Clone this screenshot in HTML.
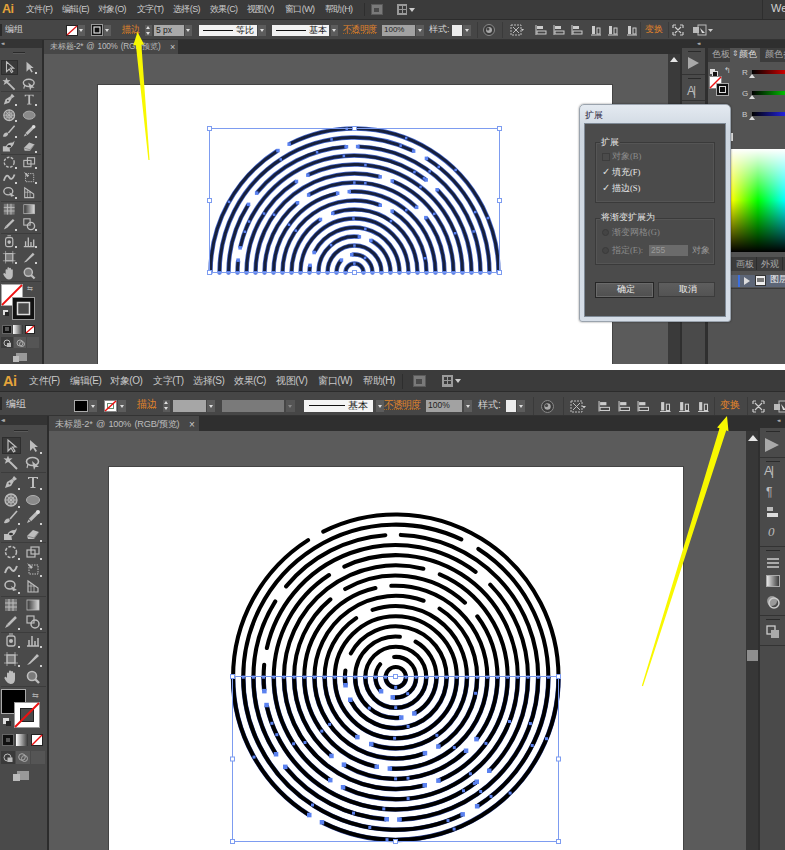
<!DOCTYPE html><html><head><meta charset="utf-8"><style>
*{box-sizing:border-box;margin:0;padding:0}
html,body{width:785px;height:850px;overflow:hidden;background:#fff}
body{position:relative;font-family:"Liberation Sans",sans-serif}
.a{position:absolute}
.t{position:absolute;white-space:nowrap;line-height:1}
.shot{position:absolute;left:0;width:785px;overflow:hidden;background:#535353}
.or{color:#e5852a;text-decoration:underline;text-underline-offset:1px}
</style></head><body>
<div class="shot" style="top:0;height:364px">
<div class="a" style="left:0px;top:0px;width:785px;height:19px;background:#3b3b3b;"></div>
<div class="a" style="left:0px;top:19px;width:785px;height:1px;background:#2c2c2c;"></div>
<div class="t" style="left:2px;top:3px;font-size:12.5px;color:#e4a33a;font-weight:bold;letter-spacing:-0.5px">Ai</div>
<div class="t" style="left:26px;top:5px;font-size:9px;color:#c9c9c9;letter-spacing:-0.6px">文件(F)</div>
<div class="t" style="left:62px;top:5px;font-size:9px;color:#c9c9c9;letter-spacing:-0.6px">编辑(E)</div>
<div class="t" style="left:98px;top:5px;font-size:9px;color:#c9c9c9;letter-spacing:-0.6px">对象(O)</div>
<div class="t" style="left:137px;top:5px;font-size:9px;color:#c9c9c9;letter-spacing:-0.6px">文字(T)</div>
<div class="t" style="left:173px;top:5px;font-size:9px;color:#c9c9c9;letter-spacing:-0.6px">选择(S)</div>
<div class="t" style="left:210px;top:5px;font-size:9px;color:#c9c9c9;letter-spacing:-0.6px">效果(C)</div>
<div class="t" style="left:247px;top:5px;font-size:9px;color:#c9c9c9;letter-spacing:-0.6px">视图(V)</div>
<div class="t" style="left:285px;top:5px;font-size:9px;color:#c9c9c9;letter-spacing:-0.6px">窗口(W)</div>
<div class="t" style="left:325px;top:5px;font-size:9px;color:#c9c9c9;letter-spacing:-0.6px">帮助(H)</div>
<div class="a" style="left:364px;top:3px;width:1px;height:13px;background:#2e2e2e;"></div>
<div class="a" style="left:371px;top:4px;width:12px;height:11px;background:#7a7a7a;border:1px solid #5a5a5a"></div>
<div class="a" style="left:374px;top:8px;width:5px;height:4px;background:#4a4a4a;"></div>
<div class="a" style="left:397px;top:4px;width:10px;height:11px;background:#9a9a9a;"></div>
<div class="a" style="left:399px;top:6px;width:3px;height:3px;background:#3b3b3b;"></div>
<div class="a" style="left:403px;top:6px;width:3px;height:3px;background:#3b3b3b;"></div>
<div class="a" style="left:399px;top:10px;width:3px;height:3px;background:#3b3b3b;"></div>
<div class="a" style="left:403px;top:10px;width:3px;height:3px;background:#3b3b3b;"></div>
<div class="a" style="left:409px;top:8px;width:0;height:0;border-left:3px solid transparent;border-right:3px solid transparent;border-top:4px solid #ccc"></div>
<div class="a" style="left:762px;top:0px;width:1px;height:19px;background:#2e2e2e;"></div>
<div class="t" style="left:771px;top:3px;font-size:11px;color:#d0d0d0;">Wel</div>
<div class="a" style="left:0px;top:20px;width:785px;height:20px;background:#464646;"></div>
<div class="a" style="left:0px;top:39px;width:785px;height:1px;background:#333;"></div>
<div class="a" style="left:0px;top:24px;width:2px;height:12px;background:#2a2a2a;"></div>
<div class="t" style="left:5px;top:25px;font-size:9px;color:#d4d4d4;">编组</div>
<svg class="a" style="left:66px;top:25px;" width="12" height="11" viewBox="0 0 12 11"><rect x=".5" y=".5" width="11" height="10" fill="#fff" stroke="#222"/><path d="M1 10 L11 1" stroke="#e01818" stroke-width="1.3"/></svg>
<div class="a" style="left:78px;top:25px;width:7px;height:11px;background:#5c5c5c"><div class="a" style="left:1.0px;top:4.0px;width:0;height:0;border-left:2.5px solid transparent;border-right:2.5px solid transparent;border-top:3px solid #dedede"></div></div>
<svg class="a" style="left:91px;top:24px;" width="12" height="12" viewBox="0 0 12 12"><rect x=".5" y=".5" width="11" height="11" fill="#111" stroke="#999"/><rect x="3" y="3" width="6" height="6" fill="#111" stroke="#ddd" stroke-width="1.2"/></svg>
<div class="a" style="left:104px;top:25px;width:7px;height:11px;background:#5c5c5c"><div class="a" style="left:1.0px;top:4.0px;width:0;height:0;border-left:2.5px solid transparent;border-right:2.5px solid transparent;border-top:3px solid #dedede"></div></div>
<div class="t" style="left:122px;top:25px;font-size:9px;color:#e0842c;text-decoration:underline dotted #a86420">描边</div>
<div class="a" style="left:145px;top:25px;width:7px;height:11px;background:#5a5a5a;"></div>
<div class="a" style="left:146px;top:26px;border-left:2.5px solid transparent;border-right:2.5px solid transparent;border-bottom:3px solid #ddd"></div>
<div class="a" style="left:146px;top:32px;border-left:2.5px solid transparent;border-right:2.5px solid transparent;border-top:3px solid #ddd"></div>
<div class="a" style="left:154px;top:25px;width:30px;height:11px;background:#a9a9a9;"></div>
<div class="t" style="left:156px;top:26px;font-size:8.5px;color:#222;">5 px</div>
<div class="a" style="left:185px;top:25px;width:7px;height:11px;background:#5c5c5c"><div class="a" style="left:1.0px;top:4.0px;width:0;height:0;border-left:2.5px solid transparent;border-right:2.5px solid transparent;border-top:3px solid #dedede"></div></div>
<div class="a" style="left:199px;top:25px;width:58px;height:11px;background:#f2f2f2;"></div>
<div class="a" style="left:203px;top:30px;width:30px;height:1.2px;background:#111;"></div>
<div class="t" style="left:236px;top:26px;font-size:9px;color:#111;">等比</div>
<div class="a" style="left:258px;top:25px;width:8px;height:11px;background:#5c5c5c"><div class="a" style="left:1.5px;top:4.0px;width:0;height:0;border-left:2.5px solid transparent;border-right:2.5px solid transparent;border-top:3px solid #dedede"></div></div>
<div class="a" style="left:272px;top:25px;width:57px;height:11px;background:#f2f2f2;"></div>
<div class="a" style="left:276px;top:30px;width:30px;height:1.2px;background:#111;"></div>
<div class="t" style="left:309px;top:26px;font-size:9px;color:#111;">基本</div>
<div class="a" style="left:331px;top:25px;width:7px;height:11px;background:#5c5c5c"><div class="a" style="left:1.0px;top:4.0px;width:0;height:0;border-left:2.5px solid transparent;border-right:2.5px solid transparent;border-top:3px solid #dedede"></div></div>
<div class="t" style="left:343px;top:25px;font-size:9px;color:#e0842c;text-decoration:underline dotted #a86420;letter-spacing:-0.7px">不透明度</div>
<div class="a" style="left:382px;top:25px;width:33px;height:11px;background:#a2a2a2;"></div>
<div class="t" style="left:384px;top:26px;font-size:8px;color:#222;">100%</div>
<div class="a" style="left:416px;top:25px;width:8px;height:11px;background:#5c5c5c"><div class="a" style="left:1.5px;top:4.0px;width:0;height:0;border-left:2.5px solid transparent;border-right:2.5px solid transparent;border-top:3px solid #dedede"></div></div>
<div class="t" style="left:429px;top:25px;font-size:9px;color:#d4d4d4;">样式:</div>
<div class="a" style="left:452px;top:25px;width:10px;height:11px;background:#ececec;"></div>
<div class="a" style="left:463px;top:25px;width:8px;height:11px;background:#5c5c5c"><div class="a" style="left:1.5px;top:4.0px;width:0;height:0;border-left:2.5px solid transparent;border-right:2.5px solid transparent;border-top:3px solid #dedede"></div></div>
<div class="a" style="left:477px;top:22px;width:1px;height:16px;background:#3a3a3a;"></div>
<svg class="a" style="left:483px;top:24px;" width="12" height="12" viewBox="0 0 12 12"><circle cx="6" cy="6" r="5.5" fill="#3a3a3a" stroke="#888"/><circle cx="6" cy="6" r="3" fill="#aaa"/><circle cx="5" cy="5" r="1.5" fill="#444"/></svg>
<div class="a" style="left:502px;top:22px;width:1px;height:16px;background:#3a3a3a;"></div>
<svg class="a" style="left:510px;top:24px;" width="14" height="12" viewBox="0 0 14 12"><rect x="1" y="1" width="10" height="10" fill="none" stroke="#bbb" stroke-dasharray="2 1"/><path d="M3 3L9 9M9 3L3 9" stroke="#bbb"/><path d="M11 5H14L12.5 7Z" fill="#ccc"/></svg>
<svg class="a" style="left:535px;top:24px;" width="12" height="12" viewBox="0 0 12 12"><g transform="scale(1)"><path d="M1 1V11" stroke="#ccc"/><rect x="2" y="2" width="6" height="3" fill="#ccc"/><rect x="2" y="7" width="9" height="3" fill="none" stroke="#ccc"/></g></svg>
<svg class="a" style="left:553px;top:24px;" width="12" height="12" viewBox="0 0 12 12"><g transform="scale(1)"><path d="M1 1V11" stroke="#ccc"/><rect x="2" y="2" width="6" height="3" fill="#ccc"/><rect x="2" y="7" width="9" height="3" fill="none" stroke="#ccc"/></g></svg>
<svg class="a" style="left:571px;top:24px;" width="12" height="12" viewBox="0 0 12 12"><g transform="scale(1)"><path d="M1 1V11" stroke="#ccc"/><rect x="2" y="2" width="6" height="3" fill="#ccc"/><rect x="2" y="7" width="9" height="3" fill="none" stroke="#ccc"/></g></svg>
<svg class="a" style="left:590px;top:24px;" width="12" height="12" viewBox="0 0 12 12"><g transform="scale(1)"><path d="M1 11H11" stroke="#ccc"/><rect x="2" y="2" width="3" height="8" fill="#ccc"/><rect x="7" y="4" width="3" height="6" fill="none" stroke="#ccc"/></g></svg>
<svg class="a" style="left:607px;top:24px;" width="12" height="12" viewBox="0 0 12 12"><g transform="scale(1)"><path d="M1 11H11" stroke="#ccc"/><rect x="2" y="2" width="3" height="8" fill="#ccc"/><rect x="7" y="4" width="3" height="6" fill="none" stroke="#ccc"/></g></svg>
<svg class="a" style="left:626px;top:24px;" width="12" height="12" viewBox="0 0 12 12"><g transform="scale(1)"><path d="M1 11H11" stroke="#ccc"/><rect x="2" y="2" width="3" height="8" fill="#ccc"/><rect x="7" y="4" width="3" height="6" fill="none" stroke="#ccc"/></g></svg>
<div class="a" style="left:640px;top:22px;width:1px;height:16px;background:#3a3a3a;"></div>
<div class="t" style="left:645px;top:25px;font-size:9px;color:#e5852a;">变换</div>
<div class="a" style="left:668px;top:22px;width:1px;height:16px;background:#3a3a3a;"></div>
<svg class="a" style="left:672px;top:24px;" width="12" height="12" viewBox="0 0 12 12"><path d="M1 1H4M1 1V4M11 1H8M11 1V4M1 11H4M1 11V8M11 11H8M11 11V8M3 3L9 9M9 3L3 9" stroke="#ccc" stroke-width="1.2"/></svg>
<svg class="a" style="left:692px;top:24px;" width="22" height="12" viewBox="0 0 22 12"><rect x="1" y="3" width="6" height="6" fill="#bbb"/><rect x="6" y="1" width="8" height="10" fill="none" stroke="#bbb"/><path d="M8 4L13 9L10 9Z" fill="#ddd"/><path d="M16 5H21L18.5 8Z" fill="#ccc"/></svg>
<div class="a" style="left:0px;top:40px;width:785px;height:14px;background:#2f2f2f;"></div>
<div class="a" style="left:44px;top:40px;width:134px;height:14px;background:#474747;"></div>
<div class="t" style="left:50px;top:43px;font-size:8.2px;color:#bdbdbd;letter-spacing:-0.2px;word-spacing:1px">未标题-2* @ 100% (RGB/预览)</div>
<div class="t" style="left:170px;top:43px;font-size:9px;color:#c9c9c9;">×</div>
<div class="a" style="left:0px;top:40px;width:43px;height:8px;background:#343434;"></div>
<div class="t" style="left:1px;top:41px;font-size:5px;color:#aaa;letter-spacing:-2px">◂◂</div>
<div class="a" style="left:0px;top:48px;width:42px;height:316px;background:#4a4a4a;"></div>
<div class="a" style="left:42px;top:40px;width:2px;height:324px;background:#2c2c2c;"></div>
<div class="a" style="left:13px;top:52px;width:12px;height:1px;background:#2a2a2a;"></div>
<div class="a" style="left:13px;top:53px;width:12px;height:1px;background:#5a5a5a;"></div>
<div class="a" style="left:1px;top:60px;width:17px;height:15px;background:#3a3a3a;border:1px solid #2e2e2e"></div>
<svg class="a" style="left:2.3px;top:59.8px;" width="14.4" height="14.4" viewBox="0 0 14.4 14.4"><g transform="scale(0.9)"><path d="M5 2 L5 13 L8 10 L10.5 14 L12 13 L9.5 9 L13 9 Z" fill="none" stroke="#bdbdbd" stroke-width="1.2"/></g></svg>
<svg class="a" style="left:22.3px;top:59.8px;" width="14.4" height="14.4" viewBox="0 0 14.4 14.4"><g transform="scale(0.9)"><path d="M5 2 L5 13 L8 10 L10.5 14 L12 13 L9.5 9 L13 9 Z" fill="#bdbdbd"/></g></svg>
<svg class="a" style="left:2.3px;top:76.8px;" width="14.4" height="14.4" viewBox="0 0 14.4 14.4"><g transform="scale(0.9)"><path d="M7 7 L14 14" stroke="#bdbdbd" stroke-width="2"/><path d="M5 0.5 L6.2 3.5 L9.5 3.3 L7 5.5 L8.3 8.8 L5 7 L1.8 8.8 L3 5.5 L0.5 3.3 L3.8 3.5Z" fill="#bdbdbd"/></g></svg>
<svg class="a" style="left:22.3px;top:76.8px;" width="14.4" height="14.4" viewBox="0 0 14.4 14.4"><g transform="scale(0.9)"><ellipse cx="7.5" cy="6.5" rx="6" ry="4" fill="none" stroke="#bdbdbd" stroke-width="1.6"/><path d="M7 6 L14 12 L10.5 12 L9 15 Z" fill="#bdbdbd"/><path d="M3 9 L2 13" stroke="#bdbdbd" stroke-width="1.2"/></g></svg>
<svg class="a" style="left:2.3px;top:91.8px;" width="14.4" height="14.4" viewBox="0 0 14.4 14.4"><g transform="scale(0.9)"><path d="M2 14 L4 8 L9 5 L11 7 L8 12 Z" fill="#bdbdbd"/><path d="M9 5 L11 2 L14 5 L11 7Z" fill="#bdbdbd"/><circle cx="6.5" cy="9.5" r="1" fill="#4a4a4a"/></g></svg>
<svg class="a" style="left:22.3px;top:91.8px;" width="14.4" height="14.4" viewBox="0 0 14.4 14.4"><g transform="scale(0.9)"><path d="M3 3 H13 V5 H12 L11.5 4 H9 V13 H10.5 V14 H5.5 V13 H7 V4 H4.5 L4 5 H3 Z" fill="#bdbdbd"/></g></svg>
<svg class="a" style="left:2.3px;top:107.8px;" width="14.4" height="14.4" viewBox="0 0 14.4 14.4"><g transform="scale(0.9)"><circle cx="8" cy="8" r="6" fill="#777" stroke="#bdbdbd" stroke-width="1.3"/><path d="M2 8H14M8 2V14M3.8 3.8L12.2 12.2M12.2 3.8L3.8 12.2" stroke="#bdbdbd" stroke-width=".8"/><circle cx="8" cy="8" r="3" fill="none" stroke="#bdbdbd" stroke-width=".8"/></g></svg>
<svg class="a" style="left:22.3px;top:107.8px;" width="14.4" height="14.4" viewBox="0 0 14.4 14.4"><g transform="scale(0.9)"><ellipse cx="8" cy="8" rx="6.5" ry="4.5" fill="#8a8a8a" stroke="#b0b0b0" stroke-width="1"/></g></svg>
<svg class="a" style="left:2.3px;top:123.8px;" width="14.4" height="14.4" viewBox="0 0 14.4 14.4"><g transform="scale(0.9)"><path d="M14 2 L7 10" stroke="#bdbdbd" stroke-width="1.6"/><path d="M1 14 Q2 9 6 9.5 Q8 12 5 13.5 Q3 14.5 1 14Z" fill="#bdbdbd"/></g></svg>
<svg class="a" style="left:22.3px;top:123.8px;" width="14.4" height="14.4" viewBox="0 0 14.4 14.4"><g transform="scale(0.9)"><path d="M13 3 L5 11" stroke="#bdbdbd" stroke-width="3.2"/><circle cx="13" cy="3" r="2" fill="#ddd"/><path d="M2 14 L3.5 10.5 L5.5 12.5 Z" fill="#bdbdbd"/></g></svg>
<svg class="a" style="left:2.3px;top:138.8px;" width="14.4" height="14.4" viewBox="0 0 14.4 14.4"><g transform="scale(0.9)"><path d="M1 8 H8 L9 14 H1 Z" fill="#bdbdbd"/><path d="M4 9 Q6 4 12 4 L14 2 Q13 9 7 11Z" fill="#bdbdbd"/><ellipse cx="8" cy="8" rx="2" ry="1.3" fill="#333"/></g></svg>
<svg class="a" style="left:22.3px;top:138.8px;" width="14.4" height="14.4" viewBox="0 0 14.4 14.4"><g transform="scale(0.9)"><path d="M2 10 L8 4 L14 6 L9 13 L3 13 Z" fill="#bdbdbd"/><path d="M2 10 L9 12 L14 6" stroke="#777" fill="none" stroke-width=".8"/></g></svg>
<svg class="a" style="left:2.3px;top:154.8px;" width="14.4" height="14.4" viewBox="0 0 14.4 14.4"><g transform="scale(0.9)"><circle cx="8" cy="8" r="5.5" fill="none" stroke="#bdbdbd" stroke-width="1.5" stroke-dasharray="3 1.5"/></g></svg>
<svg class="a" style="left:22.3px;top:154.8px;" width="14.4" height="14.4" viewBox="0 0 14.4 14.4"><g transform="scale(0.9)"><rect x="2" y="6" width="8" height="7" fill="none" stroke="#bdbdbd" stroke-width="1.2"/><rect x="6" y="3" width="8" height="7" fill="none" stroke="#bdbdbd" stroke-width="1.2"/></g></svg>
<svg class="a" style="left:2.3px;top:169.8px;" width="14.4" height="14.4" viewBox="0 0 14.4 14.4"><g transform="scale(0.9)"><path d="M2 12 Q5 3 8 8 T14 5" fill="none" stroke="#bdbdbd" stroke-width="2"/></g></svg>
<svg class="a" style="left:22.3px;top:169.8px;" width="14.4" height="14.4" viewBox="0 0 14.4 14.4"><g transform="scale(0.9)"><rect x="4" y="4" width="9" height="9" fill="none" stroke="#bdbdbd" stroke-width="1" stroke-dasharray="1.5 1"/><path d="M2 2 L8 6 L6 8Z" fill="#bdbdbd"/></g></svg>
<svg class="a" style="left:2.3px;top:184.8px;" width="14.4" height="14.4" viewBox="0 0 14.4 14.4"><g transform="scale(0.9)"><ellipse cx="7" cy="7" rx="5" ry="4" fill="none" stroke="#bdbdbd" stroke-width="1.5"/><path d="M8 8 L14 12 L10 13Z" fill="#bdbdbd"/></g></svg>
<svg class="a" style="left:22.3px;top:184.8px;" width="14.4" height="14.4" viewBox="0 0 14.4 14.4"><g transform="scale(0.9)"><path d="M3 14 V3 L13 10 V14 Z" fill="none" stroke="#bdbdbd" stroke-width="1.2"/><path d="M3 8H10M6 5V14M9 7V14" stroke="#bdbdbd" stroke-width=".8"/></g></svg>
<svg class="a" style="left:2.3px;top:201.8px;" width="14.4" height="14.4" viewBox="0 0 14.4 14.4"><g transform="scale(0.9)"><rect x="2" y="2" width="12" height="12" fill="#777"/><path d="M2 6H14M2 10H14M6 2V14M10 2V14" stroke="#bdbdbd" stroke-width="1"/></g></svg>
<svg class="a" style="left:22.3px;top:201.8px;" width="14.4" height="14.4" viewBox="0 0 14.4 14.4"><g transform="scale(0.9)"><defs><linearGradient id="gg29209"><stop offset="0" stop-color="#333"/><stop offset="1" stop-color="#ddd"/></linearGradient></defs><rect x="2" y="3" width="12" height="10" fill="url(#gg29209)" stroke="#bdbdbd" stroke-width=".8"/></g></svg>
<svg class="a" style="left:2.3px;top:216.8px;" width="14.4" height="14.4" viewBox="0 0 14.4 14.4"><g transform="scale(0.9)"><path d="M13 3 L5 11" stroke="#bdbdbd" stroke-width="2.5"/><path d="M2 14 L4 10 L6 12Z" fill="#bdbdbd"/></g></svg>
<svg class="a" style="left:22.3px;top:216.8px;" width="14.4" height="14.4" viewBox="0 0 14.4 14.4"><g transform="scale(0.9)"><rect x="2" y="2" width="7" height="7" fill="none" stroke="#bdbdbd" stroke-width="1.2"/><circle cx="10" cy="10" r="4" fill="none" stroke="#bdbdbd" stroke-width="1.5"/></g></svg>
<svg class="a" style="left:2.3px;top:233.8px;" width="14.4" height="14.4" viewBox="0 0 14.4 14.4"><g transform="scale(0.9)"><rect x="4" y="4" width="8" height="10" rx="2" fill="none" stroke="#bdbdbd" stroke-width="1.3"/><circle cx="8" cy="9" r="2" fill="#bdbdbd"/><path d="M6 2H10" stroke="#bdbdbd"/></g></svg>
<svg class="a" style="left:22.3px;top:233.8px;" width="14.4" height="14.4" viewBox="0 0 14.4 14.4"><g transform="scale(0.9)"><path d="M2 14H14M4 14V8M7 14V4M10 14V9M13 14V6" stroke="#bdbdbd" stroke-width="1.5"/></g></svg>
<svg class="a" style="left:2.3px;top:249.8px;" width="14.4" height="14.4" viewBox="0 0 14.4 14.4"><g transform="scale(0.9)"><rect x="4" y="4" width="8" height="8" fill="#777" stroke="#bdbdbd" stroke-width="1.2"/><path d="M1 4H15M1 12H15M4 1V15M12 1V15" stroke="#bdbdbd" stroke-width=".7"/></g></svg>
<svg class="a" style="left:22.3px;top:249.8px;" width="14.4" height="14.4" viewBox="0 0 14.4 14.4"><g transform="scale(0.9)"><path d="M2 14 L12 3 L14 5 L5 13 Z" fill="#bdbdbd"/></g></svg>
<svg class="a" style="left:2.3px;top:265.8px;" width="14.4" height="14.4" viewBox="0 0 14.4 14.4"><g transform="scale(0.9)"><path d="M4 9 V4.5 a1 1 0 0 1 2 0 V8 V2.5 a1 1 0 0 1 2 0 V8 V3 a1 1 0 0 1 2 0 V8 V4.5 a1 1 0 0 1 2 0 V10 Q12 15 7.5 15 Q5 15 3 12 L1.5 9.5 a1 1 0 0 1 2 -1 Z" fill="#bdbdbd"/></g></svg>
<svg class="a" style="left:22.3px;top:265.8px;" width="14.4" height="14.4" viewBox="0 0 14.4 14.4"><g transform="scale(0.9)"><circle cx="7" cy="7" r="4.5" fill="#7a7a7a" stroke="#bdbdbd" stroke-width="1.6"/><path d="M10 10 L14 14" stroke="#bdbdbd" stroke-width="2.4"/></g></svg>
<div class="a" style="left:1px;top:91px;width:40px;height:1px;background:#3c3c3c;"></div>
<div class="a" style="left:1px;top:154px;width:40px;height:1px;background:#3c3c3c;"></div>
<div class="a" style="left:1px;top:201px;width:40px;height:1px;background:#3c3c3c;"></div>
<div class="a" style="left:1px;top:233px;width:40px;height:1px;background:#3c3c3c;"></div>
<div class="a" style="left:1px;top:281px;width:40px;height:1px;background:#3c3c3c;"></div>
<div class="a" style="left:35px;top:72px;width:2px;height:2px;background:#cfcfcf;"></div>
<div class="a" style="left:15px;top:104px;width:2px;height:2px;background:#cfcfcf;"></div>
<div class="a" style="left:35px;top:104px;width:2px;height:2px;background:#cfcfcf;"></div>
<div class="a" style="left:15px;top:120px;width:2px;height:2px;background:#cfcfcf;"></div>
<div class="a" style="left:15px;top:136px;width:2px;height:2px;background:#cfcfcf;"></div>
<div class="a" style="left:35px;top:136px;width:2px;height:2px;background:#cfcfcf;"></div>
<div class="a" style="left:35px;top:151px;width:2px;height:2px;background:#cfcfcf;"></div>
<div class="a" style="left:15px;top:167px;width:2px;height:2px;background:#cfcfcf;"></div>
<div class="a" style="left:35px;top:167px;width:2px;height:2px;background:#cfcfcf;"></div>
<div class="a" style="left:15px;top:182px;width:2px;height:2px;background:#cfcfcf;"></div>
<div class="a" style="left:35px;top:182px;width:2px;height:2px;background:#cfcfcf;"></div>
<div class="a" style="left:15px;top:197px;width:2px;height:2px;background:#cfcfcf;"></div>
<div class="a" style="left:15px;top:229px;width:2px;height:2px;background:#cfcfcf;"></div>
<div class="a" style="left:35px;top:229px;width:2px;height:2px;background:#cfcfcf;"></div>
<div class="a" style="left:15px;top:246px;width:2px;height:2px;background:#cfcfcf;"></div>
<div class="a" style="left:35px;top:246px;width:2px;height:2px;background:#cfcfcf;"></div>
<div class="a" style="left:15px;top:262px;width:2px;height:2px;background:#cfcfcf;"></div>
<div class="a" style="left:35px;top:262px;width:2px;height:2px;background:#cfcfcf;"></div>
<svg class="a" style="left:1px;top:284px;" width="36" height="38" viewBox="0 0 36 38"><rect x=".5" y=".5" width="21" height="21" fill="#fff" stroke="#aaa"/><path d="M1 21L21 1" stroke="#e11" stroke-width="1.8"/><rect x="11.5" y="13.5" width="22" height="22" fill="#111" stroke="#999"/><rect x="16.5" y="18.5" width="12" height="12" fill="#4a4a4a" stroke="#ddd" stroke-width="1.5"/></svg>
<div class="t" style="left:27px;top:285px;font-size:7px;color:#aaa;">⇆</div>
<div class="a" style="left:3px;top:310px;width:5px;height:5px;background:#ddd;"></div>
<div class="a" style="left:5px;top:312px;width:4px;height:4px;background:#222;"></div>
<div class="a" style="left:2px;top:325px;width:10px;height:9px;background:#111;border:1px solid #666"></div>
<div class="a" style="left:5px;top:327px;width:4px;height:4px;background:#555;"></div>
<svg class="a" style="left:13px;top:325px;" width="10" height="9" viewBox="0 0 10 9"><defs><linearGradient id="mg1"><stop offset="0" stop-color="#fff"/><stop offset="1" stop-color="#333"/></linearGradient></defs><rect width="10" height="9" fill="url(#mg1)"/></svg>
<svg class="a" style="left:25px;top:325px;" width="10" height="9" viewBox="0 0 10 9"><rect x=".5" y=".5" width="9" height="8" fill="#fff" stroke="#222"/><path d="M1 8L9 1" stroke="#e11" stroke-width="1.3"/></svg>
<div class="a" style="left:1px;top:337px;width:12px;height:11px;background:#3a3a3a;"></div>
<div class="a" style="left:14px;top:337px;width:12px;height:11px;background:#5a5a5a;"></div>
<div class="a" style="left:27px;top:337px;width:12px;height:11px;background:#555;"></div>
<svg class="a" style="left:3px;top:339px;" width="9" height="8" viewBox="0 0 9 8"><circle cx="4" cy="4" r="3" fill="none" stroke="#bbb"/><rect x="4" y="4" width="4" height="4" fill="#bbb"/></svg>
<svg class="a" style="left:16px;top:339px;" width="9" height="8" viewBox="0 0 9 8"><circle cx="4" cy="4" r="3" fill="none" stroke="#aaa"/><circle cx="6" cy="5" r="2.5" fill="none" stroke="#aaa"/></svg>
<svg class="a" style="left:12px;top:352px;" width="16" height="11" viewBox="0 0 16 11"><rect x="4" y="1" width="11" height="8" fill="#999"/><rect x="1" y="4" width="6" height="6" fill="#bbb"/></svg>
<div class="a" style="left:44px;top:54px;width:624px;height:310px;background:#5b5b5b;"></div>
<div class="a" style="left:98px;top:85px;width:514px;height:279px;background:#ffffff;box-shadow:0 0 0 1px #444"></div>
<div class="a" style="left:668px;top:54px;width:12px;height:310px;background:#3a3a3a;"></div>
<div class="a" style="left:670px;top:57px;border-left:4px solid transparent;border-right:4px solid transparent;border-bottom:5px solid #e6e6e6"></div>
<div class="a" style="left:680px;top:40px;width:105px;height:8px;background:#2f2f2f;"></div>
<div class="t" style="left:697px;top:41px;font-size:5px;color:#aaa;letter-spacing:-2px">◂◂</div>
<div class="a" style="left:680px;top:48px;width:2px;height:316px;background:#2f2f2f;"></div>
<div class="a" style="left:682px;top:48px;width:23px;height:316px;background:#4a4a4a;"></div>
<div class="a" style="left:688px;top:51px;width:13px;height:1px;background:#2a2a2a;"></div>
<div class="a" style="left:682px;top:74px;width:23px;height:1px;background:#333;"></div>
<div class="a" style="left:682px;top:100px;width:23px;height:1px;background:#333;"></div>
<div class="a" style="left:688px;top:57px;border-top:6px solid transparent;border-bottom:6px solid transparent;border-left:11px solid #a9a9a9"></div>
<div class="a" style="left:688px;top:78px;width:13px;height:1px;background:#2a2a2a;"></div>
<div class="t" style="left:687px;top:85px;font-size:12px;color:#bbb;letter-spacing:-2px">A|</div>
<div class="a" style="left:705px;top:48px;width:3px;height:316px;background:#2f2f2f;"></div>
<div class="a" style="left:708px;top:48px;width:77px;height:316px;background:#535353;"></div>
<div class="a" style="left:708px;top:48px;width:77px;height:14px;background:#3c3c3c;"></div>
<div class="t" style="left:712px;top:50px;font-size:9px;color:#aaa;">色板</div>
<div class="a" style="left:730px;top:48px;width:30px;height:14px;background:#535353;"></div>
<div class="t" style="left:732px;top:50px;font-size:8px;color:#ccc;">⇕</div>
<div class="t" style="left:739px;top:50px;font-size:9px;color:#dedede;">颜色</div>
<div class="t" style="left:765px;top:50px;font-size:9px;color:#aaa;">颜色参考</div>
<svg class="a" style="left:709px;top:68px;" width="10" height="9" viewBox="0 0 10 9"><rect x="1" y="1" width="5" height="5" fill="#ddd"/><rect x="3.5" y="3.5" width="5" height="5" fill="#111" stroke="#ddd"/></svg>
<div class="t" style="left:724px;top:67px;font-size:8px;color:#ccc;">↰</div>
<svg class="a" style="left:709px;top:76px;" width="22" height="20" viewBox="0 0 22 20"><rect x=".5" y=".5" width="12" height="12" fill="#fff" stroke="#888"/><path d="M1 12L12 1" stroke="#e11" stroke-width="1.5"/><rect x="7.5" y="7.5" width="12" height="12" fill="#111" stroke="#aaa"/><rect x="10.5" y="10.5" width="6" height="6" fill="none" stroke="#ddd"/></svg>
<div class="t" style="left:742px;top:69px;font-size:8px;color:#ccc;">R</div>
<div class="a" style="left:752px;top:70px;width:33px;height:4px;background:linear-gradient(90deg,#000,#c00)"></div>
<div class="a" style="left:749px;top:74px;border-left:3px solid transparent;border-right:3px solid transparent;border-bottom:4px solid #ddd"></div>
<div class="t" style="left:742px;top:90px;font-size:8px;color:#ccc;">G</div>
<div class="a" style="left:752px;top:91px;width:33px;height:4px;background:linear-gradient(90deg,#000,#0b0)"></div>
<div class="a" style="left:749px;top:95px;border-left:3px solid transparent;border-right:3px solid transparent;border-bottom:4px solid #ddd"></div>
<div class="t" style="left:742px;top:111px;font-size:8px;color:#ccc;">B</div>
<div class="a" style="left:752px;top:112px;width:33px;height:4px;background:linear-gradient(90deg,#000,#22d)"></div>
<div class="a" style="left:749px;top:116px;border-left:3px solid transparent;border-right:3px solid transparent;border-bottom:4px solid #ddd"></div>
<div class="a" style="left:731px;top:133px;width:2px;height:8px;background:#ddd;"></div>
<div class="a" style="left:731px;top:149px;width:54px;height:103px;background:linear-gradient(180deg,rgba(255,255,255,1) 0%,rgba(255,255,255,0) 50%,rgba(0,0,0,0) 50%,rgba(0,0,0,1) 100%),linear-gradient(90deg,#ff0 0%,#0f0 50%,#0ff 100%)"></div>
<div class="a" style="left:731px;top:252px;width:54px;height:5px;background:#535353;"></div>
<div class="a" style="left:708px;top:257px;width:77px;height:14px;background:#3c3c3c;"></div>
<div class="t" style="left:736px;top:260px;font-size:9px;color:#aaa;">画板</div>
<div class="a" style="left:756px;top:257px;width:1px;height:13px;background:#2c2c2c;"></div>
<div class="t" style="left:761px;top:260px;font-size:9px;color:#aaa;">外观</div>
<div class="a" style="left:782px;top:257px;width:1px;height:13px;background:#2c2c2c;"></div>
<div class="a" style="left:731px;top:275px;width:54px;height:12px;background:#5d6677;"></div>
<div class="a" style="left:738px;top:275px;width:2px;height:12px;background:#3b6fe0;"></div>
<div class="a" style="left:744px;top:277px;border-top:4px solid transparent;border-bottom:4px solid transparent;border-left:6px solid #ddd"></div>
<div class="a" style="left:755px;top:275px;width:11px;height:11px;background:#eee;border:1px solid #333"></div>
<div class="a" style="left:757px;top:278px;width:7px;height:4px;background:#777;"></div>
<div class="t" style="left:770px;top:275px;font-size:9px;color:#eee;">图层</div>
<div class="a" style="left:708px;top:288px;width:77px;height:1px;background:#3a3a3a;"></div>
<svg class="a" style="left:0;top:0" width="785" height="364" viewBox="0 0 785 364"><path d="M498.50 272.50A144.00 144.00 0 0 0 290.28 143.61 M276.88 151.21A144.00 144.00 0 0 0 210.50 272.50 M489.50 272.50A135.00 135.00 0 0 0 427.56 158.98 M412.48 150.59A135.00 135.00 0 0 0 219.50 272.50 M480.50 272.50A126.00 126.00 0 0 0 358.94 146.58 M345.23 146.84A126.00 126.00 0 0 0 257.44 192.15 M247.86 205.39A126.00 126.00 0 0 0 228.50 272.50 M471.50 272.50A117.00 117.00 0 0 0 438.07 190.61 M425.11 179.21A117.00 117.00 0 0 0 240.40 246.62 M238.02 261.45A117.00 117.00 0 0 0 237.50 272.50 M462.50 272.50A108.00 108.00 0 0 0 308.95 174.58 M295.43 182.08A108.00 108.00 0 0 0 246.50 272.50 M453.50 272.50A99.00 99.00 0 0 0 393.41 181.47 M378.88 176.55A99.00 99.00 0 0 0 255.50 272.50 M444.50 272.50A90.00 90.00 0 0 0 426.61 218.65 M415.71 206.52A90.00 90.00 0 0 0 309.70 194.44 M296.59 203.60A90.00 90.00 0 0 0 264.50 272.50 M435.50 272.50A81.00 81.00 0 0 0 350.51 191.60 M336.45 193.54A81.00 81.00 0 0 0 273.50 272.50 M426.50 272.50A72.00 72.00 0 0 0 393.22 211.80 M379.09 204.83A72.00 72.00 0 0 0 282.50 272.50 M417.50 272.50A63.00 63.00 0 0 0 333.92 212.95 M319.42 220.17A63.00 63.00 0 0 0 291.50 272.50 M408.50 272.50A54.00 54.00 0 0 0 300.50 272.50 M399.50 272.50A45.00 45.00 0 0 0 314.73 251.45 M309.89 266.62A45.00 45.00 0 0 0 309.50 272.50 M390.50 272.50A36.00 36.00 0 0 0 371.99 241.03 M358.10 236.68A36.00 36.00 0 0 0 318.50 272.50 M381.50 272.50A27.00 27.00 0 0 0 327.50 272.50 M372.50 272.50A18.00 18.00 0 0 0 353.03 254.56 M340.64 261.01A18.00 18.00 0 0 0 336.50 272.50 M363.50 272.50A9.00 9.00 0 0 0 345.50 272.50" fill="none" stroke="#4466cc" stroke-width="4.40" stroke-linecap="round"/><path d="M498.50 272.50A144.00 144.00 0 0 0 290.28 143.61 M276.88 151.21A144.00 144.00 0 0 0 210.50 272.50 M489.50 272.50A135.00 135.00 0 0 0 427.56 158.98 M412.48 150.59A135.00 135.00 0 0 0 219.50 272.50 M480.50 272.50A126.00 126.00 0 0 0 358.94 146.58 M345.23 146.84A126.00 126.00 0 0 0 257.44 192.15 M247.86 205.39A126.00 126.00 0 0 0 228.50 272.50 M471.50 272.50A117.00 117.00 0 0 0 438.07 190.61 M425.11 179.21A117.00 117.00 0 0 0 240.40 246.62 M238.02 261.45A117.00 117.00 0 0 0 237.50 272.50 M462.50 272.50A108.00 108.00 0 0 0 308.95 174.58 M295.43 182.08A108.00 108.00 0 0 0 246.50 272.50 M453.50 272.50A99.00 99.00 0 0 0 393.41 181.47 M378.88 176.55A99.00 99.00 0 0 0 255.50 272.50 M444.50 272.50A90.00 90.00 0 0 0 426.61 218.65 M415.71 206.52A90.00 90.00 0 0 0 309.70 194.44 M296.59 203.60A90.00 90.00 0 0 0 264.50 272.50 M435.50 272.50A81.00 81.00 0 0 0 350.51 191.60 M336.45 193.54A81.00 81.00 0 0 0 273.50 272.50 M426.50 272.50A72.00 72.00 0 0 0 393.22 211.80 M379.09 204.83A72.00 72.00 0 0 0 282.50 272.50 M417.50 272.50A63.00 63.00 0 0 0 333.92 212.95 M319.42 220.17A63.00 63.00 0 0 0 291.50 272.50 M408.50 272.50A54.00 54.00 0 0 0 300.50 272.50 M399.50 272.50A45.00 45.00 0 0 0 314.73 251.45 M309.89 266.62A45.00 45.00 0 0 0 309.50 272.50 M390.50 272.50A36.00 36.00 0 0 0 371.99 241.03 M358.10 236.68A36.00 36.00 0 0 0 318.50 272.50 M381.50 272.50A27.00 27.00 0 0 0 327.50 272.50 M372.50 272.50A18.00 18.00 0 0 0 353.03 254.56 M340.64 261.01A18.00 18.00 0 0 0 336.50 272.50 M363.50 272.50A9.00 9.00 0 0 0 345.50 272.50" fill="none" stroke="#17203c" stroke-width="3.00" stroke-linecap="round"/><rect x="287.4" y="142.4" width="3.5" height="3.5" fill="#5b82f0"/><rect x="276.2" y="148.8" width="3.5" height="3.5" fill="#5b82f0"/><rect x="497.0" y="271.0" width="3" height="3" fill="#5b82f0"/><rect x="209.0" y="271.0" width="3" height="3" fill="#5b82f0"/><rect x="424.7" y="156.6" width="3.5" height="3.5" fill="#5b82f0"/><rect x="411.9" y="149.4" width="3.5" height="3.5" fill="#5b82f0"/><rect x="488.0" y="271.0" width="3" height="3" fill="#5b82f0"/><rect x="218.0" y="271.0" width="3" height="3" fill="#5b82f0"/><rect x="355.9" y="144.8" width="3.5" height="3.5" fill="#5b82f0"/><rect x="344.7" y="145.0" width="3.5" height="3.5" fill="#5b82f0"/><rect x="254.9" y="191.4" width="3.5" height="3.5" fill="#5b82f0"/><rect x="246.8" y="202.6" width="3.5" height="3.5" fill="#5b82f0"/><rect x="479.0" y="271.0" width="3" height="3" fill="#5b82f0"/><rect x="227.0" y="271.0" width="3" height="3" fill="#5b82f0"/><rect x="435.4" y="188.0" width="3.5" height="3.5" fill="#5b82f0"/><rect x="424.4" y="178.2" width="3.5" height="3.5" fill="#5b82f0"/><rect x="238.4" y="246.1" width="3.5" height="3.5" fill="#5b82f0"/><rect x="236.4" y="258.4" width="3.5" height="3.5" fill="#5b82f0"/><rect x="470.0" y="271.0" width="3" height="3" fill="#5b82f0"/><rect x="236.0" y="271.0" width="3" height="3" fill="#5b82f0"/><rect x="306.1" y="173.4" width="3.5" height="3.5" fill="#5b82f0"/><rect x="294.7" y="179.7" width="3.5" height="3.5" fill="#5b82f0"/><rect x="461.0" y="271.0" width="3" height="3" fill="#5b82f0"/><rect x="245.0" y="271.0" width="3" height="3" fill="#5b82f0"/><rect x="390.5" y="179.2" width="3.5" height="3.5" fill="#5b82f0"/><rect x="378.4" y="175.1" width="3.5" height="3.5" fill="#5b82f0"/><rect x="452.0" y="271.0" width="3" height="3" fill="#5b82f0"/><rect x="254.0" y="271.0" width="3" height="3" fill="#5b82f0"/><rect x="424.1" y="215.9" width="3.5" height="3.5" fill="#5b82f0"/><rect x="414.9" y="205.6" width="3.5" height="3.5" fill="#5b82f0"/><rect x="306.9" y="193.3" width="3.5" height="3.5" fill="#5b82f0"/><rect x="295.8" y="201.0" width="3.5" height="3.5" fill="#5b82f0"/><rect x="443.0" y="271.0" width="3" height="3" fill="#5b82f0"/><rect x="263.0" y="271.0" width="3" height="3" fill="#5b82f0"/><rect x="347.5" y="189.9" width="3.5" height="3.5" fill="#5b82f0"/><rect x="335.9" y="191.5" width="3.5" height="3.5" fill="#5b82f0"/><rect x="434.0" y="271.0" width="3" height="3" fill="#5b82f0"/><rect x="272.0" y="271.0" width="3" height="3" fill="#5b82f0"/><rect x="390.4" y="209.4" width="3.5" height="3.5" fill="#5b82f0"/><rect x="378.5" y="203.5" width="3.5" height="3.5" fill="#5b82f0"/><rect x="425.0" y="271.0" width="3" height="3" fill="#5b82f0"/><rect x="281.0" y="271.0" width="3" height="3" fill="#5b82f0"/><rect x="331.0" y="211.6" width="3.5" height="3.5" fill="#5b82f0"/><rect x="318.7" y="217.7" width="3.5" height="3.5" fill="#5b82f0"/><rect x="416.0" y="271.0" width="3" height="3" fill="#5b82f0"/><rect x="290.0" y="271.0" width="3" height="3" fill="#5b82f0"/><rect x="407.0" y="271.0" width="3" height="3" fill="#5b82f0"/><rect x="299.0" y="271.0" width="3" height="3" fill="#5b82f0"/><rect x="312.4" y="250.8" width="3.5" height="3.5" fill="#5b82f0"/><rect x="308.3" y="263.6" width="3.5" height="3.5" fill="#5b82f0"/><rect x="398.0" y="271.0" width="3" height="3" fill="#5b82f0"/><rect x="308.0" y="271.0" width="3" height="3" fill="#5b82f0"/><rect x="369.1" y="238.7" width="3.5" height="3.5" fill="#5b82f0"/><rect x="357.6" y="235.1" width="3.5" height="3.5" fill="#5b82f0"/><rect x="389.0" y="271.0" width="3" height="3" fill="#5b82f0"/><rect x="317.0" y="271.0" width="3" height="3" fill="#5b82f0"/><rect x="380.0" y="271.0" width="3" height="3" fill="#5b82f0"/><rect x="326.0" y="271.0" width="3" height="3" fill="#5b82f0"/><rect x="350.0" y="253.0" width="3.5" height="3.5" fill="#5b82f0"/><rect x="339.7" y="258.3" width="3.5" height="3.5" fill="#5b82f0"/><rect x="371.0" y="271.0" width="3" height="3" fill="#5b82f0"/><rect x="335.0" y="271.0" width="3" height="3" fill="#5b82f0"/><rect x="362.0" y="271.0" width="3" height="3" fill="#5b82f0"/><rect x="344.0" y="271.0" width="3" height="3" fill="#5b82f0"/><rect x="423.8" y="257.0" width="2.5" height="2.5" fill="#5b82f0"/><rect x="453.9" y="232.0" width="2.5" height="2.5" fill="#5b82f0"/><rect x="472.4" y="230.2" width="2.5" height="2.5" fill="#5b82f0"/><rect x="486.6" y="216.8" width="2.5" height="2.5" fill="#5b82f0"/><rect x="474.0" y="210.8" width="2.5" height="2.5" fill="#5b82f0"/><rect x="433.0" y="212.6" width="2.5" height="2.5" fill="#5b82f0"/><rect x="405.0" y="208.9" width="2.5" height="2.5" fill="#5b82f0"/><rect x="389.7" y="219.8" width="2.5" height="2.5" fill="#5b82f0"/><rect x="364.1" y="227.6" width="2.5" height="2.5" fill="#5b82f0"/><rect x="364.1" y="181.9" width="2.5" height="2.5" fill="#5b82f0"/><rect x="364.2" y="163.8" width="2.5" height="2.5" fill="#5b82f0"/><rect x="419.3" y="185.8" width="2.5" height="2.5" fill="#5b82f0"/><rect x="428.4" y="170.1" width="2.5" height="2.5" fill="#5b82f0"/><rect x="437.5" y="165.7" width="2.5" height="2.5" fill="#5b82f0"/><rect x="454.4" y="168.7" width="2.5" height="2.5" fill="#5b82f0"/><rect x="404.9" y="136.8" width="2.5" height="2.5" fill="#5b82f0"/><rect x="399.4" y="144.4" width="2.5" height="2.5" fill="#5b82f0"/><rect x="413.2" y="170.8" width="2.5" height="2.5" fill="#5b82f0"/><rect x="422.7" y="177.1" width="2.5" height="2.5" fill="#5b82f0"/><rect x="357.0" y="145.3" width="2.5" height="2.5" fill="#5b82f0"/><rect x="363.8" y="256.7" width="2.5" height="2.5" fill="#5b82f0"/><rect x="243.6" y="230.5" width="2.5" height="2.5" fill="#5b82f0"/><rect x="247.9" y="220.3" width="2.5" height="2.5" fill="#5b82f0"/><rect x="262.8" y="212.3" width="2.5" height="2.5" fill="#5b82f0"/><rect x="272.9" y="213.5" width="2.5" height="2.5" fill="#5b82f0"/><rect x="287.8" y="223.5" width="2.5" height="2.5" fill="#5b82f0"/><rect x="294.6" y="229.4" width="2.5" height="2.5" fill="#5b82f0"/><rect x="313.1" y="250.9" width="2.5" height="2.5" fill="#5b82f0"/><rect x="329.8" y="243.9" width="2.5" height="2.5" fill="#5b82f0"/><rect x="353.1" y="262.3" width="2.5" height="2.5" fill="#5b82f0"/><rect x="353.2" y="244.3" width="2.5" height="2.5" fill="#5b82f0"/><rect x="352.2" y="217.3" width="2.5" height="2.5" fill="#5b82f0"/><rect x="353.1" y="181.3" width="2.5" height="2.5" fill="#5b82f0"/><rect x="279.5" y="158.2" width="2.5" height="2.5" fill="#5b82f0"/><rect x="315.8" y="151.0" width="2.5" height="2.5" fill="#5b82f0"/><rect x="330.3" y="138.2" width="2.5" height="2.5" fill="#5b82f0"/><rect x="344.5" y="145.6" width="2.5" height="2.5" fill="#5b82f0"/><rect x="342.6" y="154.7" width="2.5" height="2.5" fill="#5b82f0"/><rect x="345.5" y="127.5" width="2.5" height="2.5" fill="#5b82f0"/><rect x="227.8" y="200.6" width="2.5" height="2.5" fill="#5b82f0"/><rect x="209.5" y="128.5" width="290.0" height="144.0" fill="none" stroke="#7d9cf0" stroke-width="1"/><rect x="207.5" y="126.5" width="4" height="4" fill="#fff" stroke="#7d9cf0" stroke-width="1"/><rect x="352.5" y="126.5" width="4" height="4" fill="#fff" stroke="#7d9cf0" stroke-width="1"/><rect x="497.5" y="126.5" width="4" height="4" fill="#fff" stroke="#7d9cf0" stroke-width="1"/><rect x="207.5" y="198.5" width="4" height="4" fill="#fff" stroke="#7d9cf0" stroke-width="1"/><rect x="497.5" y="198.5" width="4" height="4" fill="#fff" stroke="#7d9cf0" stroke-width="1"/><rect x="207.5" y="270.5" width="4" height="4" fill="#fff" stroke="#7d9cf0" stroke-width="1"/><rect x="352.5" y="270.5" width="4" height="4" fill="#fff" stroke="#7d9cf0" stroke-width="1"/><rect x="497.5" y="270.5" width="4" height="4" fill="#fff" stroke="#7d9cf0" stroke-width="1"/></svg>
<div class="a" style="left:579px;top:104px;width:152px;height:218px;border-radius:5px 5px 3px 3px;background:linear-gradient(180deg,#e4eaf1,#cdd6e0 12%,#d6dee8);border:1px solid #9aa3ad;box-shadow:0 0 2px rgba(0,0,0,.5)"></div>
<div class="t" style="left:585px;top:111px;font-size:9px;color:#2a1c3a;">扩展</div>
<div class="a" style="left:584px;top:123px;width:142px;height:194px;background:#4b4b4b;border:1px solid #7f8a96"></div>
<div class="a" style="left:595px;top:142px;width:120px;height:61px;background:transparent;border:1px solid #3a3a3a;box-shadow:inset 0 0 0 1px #555"></div>
<div class="a" style="left:600px;top:137px;width:20px;height:10px;background:#4b4b4b;"></div>
<div class="t" style="left:601px;top:138px;font-size:9px;color:#e6e6e6;">扩展</div>
<div class="a" style="left:602px;top:153px;width:8px;height:8px;background:transparent;border:1px solid #3d3d3d"></div>
<div class="t" style="left:612px;top:152px;font-size:8.5px;color:#8c8c8c;font-family:'Liberation Serif',serif">对象(B)</div>
<div class="t" style="left:602px;top:167px;font-size:10px;color:#ddd;">✓</div>
<div class="t" style="left:612px;top:168px;font-size:8.5px;color:#e8e8e8;font-family:'Liberation Serif',serif">填充(F)</div>
<div class="t" style="left:602px;top:183px;font-size:10px;color:#ddd;">✓</div>
<div class="t" style="left:612px;top:184px;font-size:8.5px;color:#e8e8e8;font-family:'Liberation Serif',serif">描边(S)</div>
<div class="a" style="left:595px;top:218px;width:120px;height:47px;background:transparent;border:1px solid #3a3a3a;box-shadow:inset 0 0 0 1px #555"></div>
<div class="a" style="left:600px;top:212px;width:54px;height:10px;background:#4b4b4b;"></div>
<div class="t" style="left:601px;top:213px;font-size:9px;color:#e6e6e6;">将渐变扩展为</div>
<div class="a" style="left:602px;top:229px;width:7px;height:7px;background:#444;border-radius:50%;border:1px solid #3a3a3a"></div>
<div class="t" style="left:612px;top:228px;font-size:8.5px;color:#8c8c8c;font-family:'Liberation Serif',serif">渐变网格(G)</div>
<div class="a" style="left:602px;top:247px;width:7px;height:7px;background:#444;border-radius:50%;border:1px solid #3a3a3a"></div>
<div class="t" style="left:612px;top:246px;font-size:8.5px;color:#8c8c8c;font-family:'Liberation Serif',serif">指定(E):</div>
<div class="a" style="left:649px;top:245px;width:39px;height:11px;background:#6b6b6b;"></div>
<div class="t" style="left:651px;top:246px;font-size:8.5px;color:#9a9a9a;">255</div>
<div class="t" style="left:692px;top:246px;font-size:9px;color:#9a9a9a;">对象</div>
<div class="a" style="left:595px;top:282px;width:59px;height:16px;background:linear-gradient(#5e5e5e,#4f4f4f);border:1px solid #262626;box-shadow:inset 0 0 0 1px #6a6a6a"></div>
<div class="t" style="left:617px;top:285px;font-size:9px;color:#eee;">确定</div>
<div class="a" style="left:658px;top:282px;width:57px;height:15px;background:linear-gradient(#5e5e5e,#535353);border:1px solid #3c3c3c"></div>
<div class="t" style="left:679px;top:285px;font-size:9px;color:#eee;">取消</div>
<svg class="a" style="left:0;top:0" width="785" height="363"><polygon points="137.5,32.0 144.1,44.5 141.4,44.7 149.6,159.9 148.4,160.1 135.9,45.2 133.2,45.4" fill="#f8f800"/></svg>
</div>
<div class="shot" style="top:370px;height:480px">
<div class="a" style="left:0px;top:0px;width:785px;height:22px;background:#3b3b3b;"></div>
<div class="a" style="left:0px;top:21px;width:785px;height:1px;background:#2c2c2c;"></div>
<div class="t" style="left:3px;top:4px;font-size:14.5px;color:#e4a33a;font-weight:bold;letter-spacing:-0.5px">Ai</div>
<div class="t" style="left:29px;top:6px;font-size:10px;color:#c9c9c9;letter-spacing:-0.4px">文件(F)</div>
<div class="t" style="left:70px;top:6px;font-size:10px;color:#c9c9c9;letter-spacing:-0.4px">编辑(E)</div>
<div class="t" style="left:110px;top:6px;font-size:10px;color:#c9c9c9;letter-spacing:-0.4px">对象(O)</div>
<div class="t" style="left:153px;top:6px;font-size:10px;color:#c9c9c9;letter-spacing:-0.4px">文字(T)</div>
<div class="t" style="left:193px;top:6px;font-size:10px;color:#c9c9c9;letter-spacing:-0.4px">选择(S)</div>
<div class="t" style="left:234px;top:6px;font-size:10px;color:#c9c9c9;letter-spacing:-0.4px">效果(C)</div>
<div class="t" style="left:276px;top:6px;font-size:10px;color:#c9c9c9;letter-spacing:-0.4px">视图(V)</div>
<div class="t" style="left:318px;top:6px;font-size:10px;color:#c9c9c9;letter-spacing:-0.4px">窗口(W)</div>
<div class="t" style="left:363px;top:6px;font-size:10px;color:#c9c9c9;letter-spacing:-0.4px">帮助(H)</div>
<div class="a" style="left:402px;top:4px;width:1px;height:15px;background:#2e2e2e;"></div>
<div class="a" style="left:413px;top:5px;width:13px;height:12px;background:#7a7a7a;border:1px solid #5a5a5a"></div>
<div class="a" style="left:416px;top:9px;width:6px;height:5px;background:#4a4a4a;"></div>
<div class="a" style="left:442px;top:5px;width:11px;height:12px;background:#9a9a9a;"></div>
<div class="a" style="left:444px;top:7px;width:3px;height:3px;background:#3b3b3b;"></div>
<div class="a" style="left:448px;top:7px;width:3px;height:3px;background:#3b3b3b;"></div>
<div class="a" style="left:444px;top:11px;width:3px;height:3px;background:#3b3b3b;"></div>
<div class="a" style="left:448px;top:11px;width:3px;height:3px;background:#3b3b3b;"></div>
<div class="a" style="left:455px;top:9px;width:0;height:0;border-left:3px solid transparent;border-right:3px solid transparent;border-top:4px solid #ccc"></div>
<div class="a" style="left:0px;top:22px;width:785px;height:24px;background:#464646;"></div>
<div class="a" style="left:0px;top:45px;width:785px;height:1px;background:#333;"></div>
<div class="a" style="left:0px;top:27px;width:2px;height:13px;background:#2a2a2a;"></div>
<div class="t" style="left:6px;top:29px;font-size:10px;color:#d4d4d4;">编组</div>
<svg class="a" style="left:74px;top:30px;" width="14" height="12" viewBox="0 0 14 12"><rect x=".5" y=".5" width="13" height="11" fill="#000" stroke="#aaa"/></svg>
<div class="a" style="left:89px;top:30px;width:8px;height:12px;background:#5c5c5c"><div class="a" style="left:1.5px;top:4.5px;width:0;height:0;border-left:2.5px solid transparent;border-right:2.5px solid transparent;border-top:3px solid #dedede"></div></div>
<svg class="a" style="left:104px;top:30px;" width="13" height="12" viewBox="0 0 13 12"><rect x=".5" y=".5" width="12" height="11" fill="#fff" stroke="#888"/><rect x="3.5" y="3.5" width="6" height="5" fill="none" stroke="#6a8a70" stroke-width="1"/><path d="M1 11L12 1" stroke="#e11" stroke-width="1.5"/></svg>
<div class="a" style="left:118px;top:30px;width:8px;height:12px;background:#5c5c5c"><div class="a" style="left:1.5px;top:4.5px;width:0;height:0;border-left:2.5px solid transparent;border-right:2.5px solid transparent;border-top:3px solid #dedede"></div></div>
<div class="t" style="left:137px;top:29px;font-size:10px;color:#e0842c;text-decoration:underline dotted #a86420">描边</div>
<div class="a" style="left:163px;top:30px;width:7px;height:12px;background:#5a5a5a;"></div>
<div class="a" style="left:164px;top:31px;border-left:2.5px solid transparent;border-right:2.5px solid transparent;border-bottom:3px solid #ddd"></div>
<div class="a" style="left:164px;top:37px;border-left:2.5px solid transparent;border-right:2.5px solid transparent;border-top:3px solid #ddd"></div>
<div class="a" style="left:173px;top:30px;width:33px;height:12px;background:#a6a6a6;"></div>
<div class="a" style="left:207px;top:30px;width:8px;height:12px;background:#5c5c5c"><div class="a" style="left:1.5px;top:4.5px;width:0;height:0;border-left:2.5px solid transparent;border-right:2.5px solid transparent;border-top:3px solid #dedede"></div></div>
<div class="a" style="left:222px;top:30px;width:62px;height:12px;background:#7a7a7a;"></div>
<div class="a" style="left:286px;top:30px;width:9px;height:12px;background:#555"><div class="a" style="left:2.0px;top:4.5px;width:0;height:0;border-left:2.5px solid transparent;border-right:2.5px solid transparent;border-top:3px solid #888"></div></div>
<div class="a" style="left:304px;top:30px;width:69px;height:12px;background:#f4f4f4;"></div>
<div class="a" style="left:309px;top:35px;width:36px;height:1.3px;background:#111;"></div>
<div class="t" style="left:348px;top:31px;font-size:10px;color:#111;">基本</div>
<div class="a" style="left:376px;top:30px;width:8px;height:12px;background:#5c5c5c"><div class="a" style="left:1.5px;top:4.5px;width:0;height:0;border-left:2.5px solid transparent;border-right:2.5px solid transparent;border-top:3px solid #dedede"></div></div>
<div class="t" style="left:384px;top:30px;font-size:10px;color:#e0842c;text-decoration:underline dotted #a86420;letter-spacing:-1px">不透明度</div>
<div class="a" style="left:426px;top:30px;width:36px;height:12px;background:#a2a2a2;"></div>
<div class="t" style="left:428px;top:31px;font-size:8.5px;color:#222;">100%</div>
<div class="a" style="left:464px;top:30px;width:8px;height:12px;background:#5c5c5c"><div class="a" style="left:1.5px;top:4.5px;width:0;height:0;border-left:2.5px solid transparent;border-right:2.5px solid transparent;border-top:3px solid #dedede"></div></div>
<div class="t" style="left:478px;top:30px;font-size:10px;color:#d4d4d4;">样式:</div>
<div class="a" style="left:506px;top:30px;width:10px;height:12px;background:#ececec;"></div>
<div class="a" style="left:517px;top:30px;width:8px;height:12px;background:#5c5c5c"><div class="a" style="left:1.5px;top:4.5px;width:0;height:0;border-left:2.5px solid transparent;border-right:2.5px solid transparent;border-top:3px solid #dedede"></div></div>
<div class="a" style="left:533px;top:27px;width:1px;height:18px;background:#3a3a3a;"></div>
<svg class="a" style="left:541px;top:30px;" width="13" height="13" viewBox="0 0 13 13"><circle cx="6.5" cy="6.5" r="6" fill="#3a3a3a" stroke="#888"/><circle cx="6.5" cy="6.5" r="3.2" fill="#aaa"/><circle cx="5.5" cy="5.5" r="1.6" fill="#444"/></svg>
<div class="a" style="left:563px;top:27px;width:1px;height:18px;background:#3a3a3a;"></div>
<svg class="a" style="left:570px;top:30px;" width="16" height="13" viewBox="0 0 16 13"><rect x="1" y="1" width="11" height="11" fill="none" stroke="#bbb" stroke-dasharray="2 1"/><path d="M3 3L10 10M10 3L3 10" stroke="#bbb"/><path d="M12 6H16L14 8.5Z" fill="#ccc"/></svg>
<svg class="a" style="left:598px;top:30px;" width="12" height="12" viewBox="0 0 12 12"><g transform="scale(1.05)"><path d="M1 1V11" stroke="#ccc"/><rect x="2" y="2" width="6" height="3" fill="#ccc"/><rect x="2" y="7" width="9" height="3" fill="none" stroke="#ccc"/></g></svg>
<svg class="a" style="left:618px;top:30px;" width="12" height="12" viewBox="0 0 12 12"><g transform="scale(1.05)"><path d="M1 1V11" stroke="#ccc"/><rect x="2" y="2" width="6" height="3" fill="#ccc"/><rect x="2" y="7" width="9" height="3" fill="none" stroke="#ccc"/></g></svg>
<svg class="a" style="left:637px;top:30px;" width="12" height="12" viewBox="0 0 12 12"><g transform="scale(1.05)"><path d="M1 1V11" stroke="#ccc"/><rect x="2" y="2" width="6" height="3" fill="#ccc"/><rect x="2" y="7" width="9" height="3" fill="none" stroke="#ccc"/></g></svg>
<svg class="a" style="left:659px;top:30px;" width="12" height="12" viewBox="0 0 12 12"><g transform="scale(1.05)"><path d="M1 11H11" stroke="#ccc"/><rect x="2" y="2" width="3" height="8" fill="#ccc"/><rect x="7" y="4" width="3" height="6" fill="none" stroke="#ccc"/></g></svg>
<svg class="a" style="left:678px;top:30px;" width="12" height="12" viewBox="0 0 12 12"><g transform="scale(1.05)"><path d="M1 11H11" stroke="#ccc"/><rect x="2" y="2" width="3" height="8" fill="#ccc"/><rect x="7" y="4" width="3" height="6" fill="none" stroke="#ccc"/></g></svg>
<svg class="a" style="left:697px;top:30px;" width="12" height="12" viewBox="0 0 12 12"><g transform="scale(1.05)"><path d="M1 11H11" stroke="#ccc"/><rect x="2" y="2" width="3" height="8" fill="#ccc"/><rect x="7" y="4" width="3" height="6" fill="none" stroke="#ccc"/></g></svg>
<div class="a" style="left:714px;top:27px;width:1px;height:18px;background:#3a3a3a;"></div>
<div class="t" style="left:720px;top:30px;font-size:10px;color:#e5852a;">变换</div>
<div class="a" style="left:747px;top:27px;width:1px;height:18px;background:#3a3a3a;"></div>
<svg class="a" style="left:752px;top:30px;" width="13" height="13" viewBox="0 0 13 13"><path d="M1 1H4M1 1V4M12 1H9M12 1V4M1 12H4M1 12V9M12 12H9M12 12V9M3 3L10 10M10 3L3 10" stroke="#ccc" stroke-width="1.2"/></svg>
<svg class="a" style="left:773px;top:30px;" width="12" height="13" viewBox="0 0 12 13"><rect x="1" y="4" width="6" height="6" fill="#bbb"/><rect x="6" y="1" width="8" height="11" fill="none" stroke="#bbb"/><path d="M8 4L13 10L10 10Z" fill="#ddd"/></svg>
<div class="a" style="left:0px;top:46px;width:785px;height:15px;background:#2f2f2f;"></div>
<div class="a" style="left:49px;top:46px;width:150px;height:15px;background:#474747;"></div>
<div class="t" style="left:55px;top:50px;font-size:9.2px;color:#bdbdbd;letter-spacing:-0.2px;word-spacing:1px">未标题-2* @ 100% (RGB/预览)</div>
<div class="t" style="left:189px;top:50px;font-size:10px;color:#c9c9c9;">×</div>
<div class="a" style="left:0px;top:46px;width:47px;height:9px;background:#343434;"></div>
<div class="t" style="left:1px;top:47px;font-size:6px;color:#aaa;letter-spacing:-2px">◂◂</div>
<div class="a" style="left:0px;top:55px;width:47px;height:425px;background:#4a4a4a;"></div>
<div class="a" style="left:47px;top:46px;width:2px;height:434px;background:#2c2c2c;"></div>
<div class="a" style="left:14px;top:60px;width:14px;height:1px;background:#2a2a2a;"></div>
<div class="a" style="left:14px;top:61px;width:14px;height:1px;background:#5a5a5a;"></div>
<div class="a" style="left:2px;top:67px;width:19px;height:17px;background:#3a3a3a;border:1px solid #2e2e2e"></div>
<svg class="a" style="left:2.5px;top:68.0px;" width="16.0" height="16.0" viewBox="0 0 16.0 16.0"><g transform="scale(1.0)"><path d="M5 2 L5 13 L8 10 L10.5 14 L12 13 L9.5 9 L13 9 Z" fill="none" stroke="#bdbdbd" stroke-width="1.2"/></g></svg>
<svg class="a" style="left:24.5px;top:68.0px;" width="16.0" height="16.0" viewBox="0 0 16.0 16.0"><g transform="scale(1.0)"><path d="M5 2 L5 13 L8 10 L10.5 14 L12 13 L9.5 9 L13 9 Z" fill="#bdbdbd"/></g></svg>
<svg class="a" style="left:2.5px;top:85.0px;" width="16.0" height="16.0" viewBox="0 0 16.0 16.0"><g transform="scale(1.0)"><path d="M7 7 L14 14" stroke="#bdbdbd" stroke-width="2"/><path d="M5 0.5 L6.2 3.5 L9.5 3.3 L7 5.5 L8.3 8.8 L5 7 L1.8 8.8 L3 5.5 L0.5 3.3 L3.8 3.5Z" fill="#bdbdbd"/></g></svg>
<svg class="a" style="left:24.5px;top:85.0px;" width="16.0" height="16.0" viewBox="0 0 16.0 16.0"><g transform="scale(1.0)"><ellipse cx="7.5" cy="6.5" rx="6" ry="4" fill="none" stroke="#bdbdbd" stroke-width="1.6"/><path d="M7 6 L14 12 L10.5 12 L9 15 Z" fill="#bdbdbd"/><path d="M3 9 L2 13" stroke="#bdbdbd" stroke-width="1.2"/></g></svg>
<svg class="a" style="left:2.5px;top:104.0px;" width="16.0" height="16.0" viewBox="0 0 16.0 16.0"><g transform="scale(1.0)"><path d="M2 14 L4 8 L9 5 L11 7 L8 12 Z" fill="#bdbdbd"/><path d="M9 5 L11 2 L14 5 L11 7Z" fill="#bdbdbd"/><circle cx="6.5" cy="9.5" r="1" fill="#4a4a4a"/></g></svg>
<svg class="a" style="left:24.5px;top:104.0px;" width="16.0" height="16.0" viewBox="0 0 16.0 16.0"><g transform="scale(1.0)"><path d="M3 3 H13 V5 H12 L11.5 4 H9 V13 H10.5 V14 H5.5 V13 H7 V4 H4.5 L4 5 H3 Z" fill="#bdbdbd"/></g></svg>
<svg class="a" style="left:2.5px;top:122.0px;" width="16.0" height="16.0" viewBox="0 0 16.0 16.0"><g transform="scale(1.0)"><circle cx="8" cy="8" r="6" fill="#777" stroke="#bdbdbd" stroke-width="1.3"/><path d="M2 8H14M8 2V14M3.8 3.8L12.2 12.2M12.2 3.8L3.8 12.2" stroke="#bdbdbd" stroke-width=".8"/><circle cx="8" cy="8" r="3" fill="none" stroke="#bdbdbd" stroke-width=".8"/></g></svg>
<svg class="a" style="left:24.5px;top:122.0px;" width="16.0" height="16.0" viewBox="0 0 16.0 16.0"><g transform="scale(1.0)"><ellipse cx="8" cy="8" rx="6.5" ry="4.5" fill="#8a8a8a" stroke="#b0b0b0" stroke-width="1"/></g></svg>
<svg class="a" style="left:2.5px;top:139.0px;" width="16.0" height="16.0" viewBox="0 0 16.0 16.0"><g transform="scale(1.0)"><path d="M14 2 L7 10" stroke="#bdbdbd" stroke-width="1.6"/><path d="M1 14 Q2 9 6 9.5 Q8 12 5 13.5 Q3 14.5 1 14Z" fill="#bdbdbd"/></g></svg>
<svg class="a" style="left:24.5px;top:139.0px;" width="16.0" height="16.0" viewBox="0 0 16.0 16.0"><g transform="scale(1.0)"><path d="M13 3 L5 11" stroke="#bdbdbd" stroke-width="3.2"/><circle cx="13" cy="3" r="2" fill="#ddd"/><path d="M2 14 L3.5 10.5 L5.5 12.5 Z" fill="#bdbdbd"/></g></svg>
<svg class="a" style="left:2.5px;top:156.0px;" width="16.0" height="16.0" viewBox="0 0 16.0 16.0"><g transform="scale(1.0)"><path d="M1 8 H8 L9 14 H1 Z" fill="#bdbdbd"/><path d="M4 9 Q6 4 12 4 L14 2 Q13 9 7 11Z" fill="#bdbdbd"/><ellipse cx="8" cy="8" rx="2" ry="1.3" fill="#333"/></g></svg>
<svg class="a" style="left:24.5px;top:156.0px;" width="16.0" height="16.0" viewBox="0 0 16.0 16.0"><g transform="scale(1.0)"><path d="M2 10 L8 4 L14 6 L9 13 L3 13 Z" fill="#bdbdbd"/><path d="M2 10 L9 12 L14 6" stroke="#777" fill="none" stroke-width=".8"/></g></svg>
<svg class="a" style="left:2.5px;top:174.0px;" width="16.0" height="16.0" viewBox="0 0 16.0 16.0"><g transform="scale(1.0)"><circle cx="8" cy="8" r="5.5" fill="none" stroke="#bdbdbd" stroke-width="1.5" stroke-dasharray="3 1.5"/></g></svg>
<svg class="a" style="left:24.5px;top:174.0px;" width="16.0" height="16.0" viewBox="0 0 16.0 16.0"><g transform="scale(1.0)"><rect x="2" y="6" width="8" height="7" fill="none" stroke="#bdbdbd" stroke-width="1.2"/><rect x="6" y="3" width="8" height="7" fill="none" stroke="#bdbdbd" stroke-width="1.2"/></g></svg>
<svg class="a" style="left:2.5px;top:191.0px;" width="16.0" height="16.0" viewBox="0 0 16.0 16.0"><g transform="scale(1.0)"><path d="M2 12 Q5 3 8 8 T14 5" fill="none" stroke="#bdbdbd" stroke-width="2"/></g></svg>
<svg class="a" style="left:24.5px;top:191.0px;" width="16.0" height="16.0" viewBox="0 0 16.0 16.0"><g transform="scale(1.0)"><rect x="4" y="4" width="9" height="9" fill="none" stroke="#bdbdbd" stroke-width="1" stroke-dasharray="1.5 1"/><path d="M2 2 L8 6 L6 8Z" fill="#bdbdbd"/></g></svg>
<svg class="a" style="left:2.5px;top:208.0px;" width="16.0" height="16.0" viewBox="0 0 16.0 16.0"><g transform="scale(1.0)"><ellipse cx="7" cy="7" rx="5" ry="4" fill="none" stroke="#bdbdbd" stroke-width="1.5"/><path d="M8 8 L14 12 L10 13Z" fill="#bdbdbd"/></g></svg>
<svg class="a" style="left:24.5px;top:208.0px;" width="16.0" height="16.0" viewBox="0 0 16.0 16.0"><g transform="scale(1.0)"><path d="M3 14 V3 L13 10 V14 Z" fill="none" stroke="#bdbdbd" stroke-width="1.2"/><path d="M3 8H10M6 5V14M9 7V14" stroke="#bdbdbd" stroke-width=".8"/></g></svg>
<svg class="a" style="left:2.5px;top:227.0px;" width="16.0" height="16.0" viewBox="0 0 16.0 16.0"><g transform="scale(1.0)"><rect x="2" y="2" width="12" height="12" fill="#777"/><path d="M2 6H14M2 10H14M6 2V14M10 2V14" stroke="#bdbdbd" stroke-width="1"/></g></svg>
<svg class="a" style="left:24.5px;top:227.0px;" width="16.0" height="16.0" viewBox="0 0 16.0 16.0"><g transform="scale(1.0)"><defs><linearGradient id="gg32235"><stop offset="0" stop-color="#333"/><stop offset="1" stop-color="#ddd"/></linearGradient></defs><rect x="2" y="3" width="12" height="10" fill="url(#gg32235)" stroke="#bdbdbd" stroke-width=".8"/></g></svg>
<svg class="a" style="left:2.5px;top:244.0px;" width="16.0" height="16.0" viewBox="0 0 16.0 16.0"><g transform="scale(1.0)"><path d="M13 3 L5 11" stroke="#bdbdbd" stroke-width="2.5"/><path d="M2 14 L4 10 L6 12Z" fill="#bdbdbd"/></g></svg>
<svg class="a" style="left:24.5px;top:244.0px;" width="16.0" height="16.0" viewBox="0 0 16.0 16.0"><g transform="scale(1.0)"><rect x="2" y="2" width="7" height="7" fill="none" stroke="#bdbdbd" stroke-width="1.2"/><circle cx="10" cy="10" r="4" fill="none" stroke="#bdbdbd" stroke-width="1.5"/></g></svg>
<svg class="a" style="left:2.5px;top:262.0px;" width="16.0" height="16.0" viewBox="0 0 16.0 16.0"><g transform="scale(1.0)"><rect x="4" y="4" width="8" height="10" rx="2" fill="none" stroke="#bdbdbd" stroke-width="1.3"/><circle cx="8" cy="9" r="2" fill="#bdbdbd"/><path d="M6 2H10" stroke="#bdbdbd"/></g></svg>
<svg class="a" style="left:24.5px;top:262.0px;" width="16.0" height="16.0" viewBox="0 0 16.0 16.0"><g transform="scale(1.0)"><path d="M2 14H14M4 14V8M7 14V4M10 14V9M13 14V6" stroke="#bdbdbd" stroke-width="1.5"/></g></svg>
<svg class="a" style="left:2.5px;top:281.0px;" width="16.0" height="16.0" viewBox="0 0 16.0 16.0"><g transform="scale(1.0)"><rect x="4" y="4" width="8" height="8" fill="#777" stroke="#bdbdbd" stroke-width="1.2"/><path d="M1 4H15M1 12H15M4 1V15M12 1V15" stroke="#bdbdbd" stroke-width=".7"/></g></svg>
<svg class="a" style="left:24.5px;top:281.0px;" width="16.0" height="16.0" viewBox="0 0 16.0 16.0"><g transform="scale(1.0)"><path d="M2 14 L12 3 L14 5 L5 13 Z" fill="#bdbdbd"/></g></svg>
<svg class="a" style="left:2.5px;top:299.0px;" width="16.0" height="16.0" viewBox="0 0 16.0 16.0"><g transform="scale(1.0)"><path d="M4 9 V4.5 a1 1 0 0 1 2 0 V8 V2.5 a1 1 0 0 1 2 0 V8 V3 a1 1 0 0 1 2 0 V8 V4.5 a1 1 0 0 1 2 0 V10 Q12 15 7.5 15 Q5 15 3 12 L1.5 9.5 a1 1 0 0 1 2 -1 Z" fill="#bdbdbd"/></g></svg>
<svg class="a" style="left:24.5px;top:299.0px;" width="16.0" height="16.0" viewBox="0 0 16.0 16.0"><g transform="scale(1.0)"><circle cx="7" cy="7" r="4.5" fill="#7a7a7a" stroke="#bdbdbd" stroke-width="1.6"/><path d="M10 10 L14 14" stroke="#bdbdbd" stroke-width="2.4"/></g></svg>
<div class="a" style="left:1px;top:102px;width:45px;height:1px;background:#3c3c3c;"></div>
<div class="a" style="left:1px;top:172px;width:45px;height:1px;background:#3c3c3c;"></div>
<div class="a" style="left:1px;top:226px;width:45px;height:1px;background:#3c3c3c;"></div>
<div class="a" style="left:1px;top:262px;width:45px;height:1px;background:#3c3c3c;"></div>
<div class="a" style="left:1px;top:316px;width:45px;height:1px;background:#3c3c3c;"></div>
<div class="a" style="left:40px;top:82px;width:2px;height:2px;background:#cfcfcf;"></div>
<div class="a" style="left:18px;top:118px;width:2px;height:2px;background:#cfcfcf;"></div>
<div class="a" style="left:40px;top:118px;width:2px;height:2px;background:#cfcfcf;"></div>
<div class="a" style="left:18px;top:136px;width:2px;height:2px;background:#cfcfcf;"></div>
<div class="a" style="left:18px;top:153px;width:2px;height:2px;background:#cfcfcf;"></div>
<div class="a" style="left:40px;top:153px;width:2px;height:2px;background:#cfcfcf;"></div>
<div class="a" style="left:40px;top:170px;width:2px;height:2px;background:#cfcfcf;"></div>
<div class="a" style="left:18px;top:188px;width:2px;height:2px;background:#cfcfcf;"></div>
<div class="a" style="left:40px;top:188px;width:2px;height:2px;background:#cfcfcf;"></div>
<div class="a" style="left:18px;top:205px;width:2px;height:2px;background:#cfcfcf;"></div>
<div class="a" style="left:40px;top:205px;width:2px;height:2px;background:#cfcfcf;"></div>
<div class="a" style="left:18px;top:222px;width:2px;height:2px;background:#cfcfcf;"></div>
<div class="a" style="left:18px;top:258px;width:2px;height:2px;background:#cfcfcf;"></div>
<div class="a" style="left:40px;top:258px;width:2px;height:2px;background:#cfcfcf;"></div>
<div class="a" style="left:18px;top:276px;width:2px;height:2px;background:#cfcfcf;"></div>
<div class="a" style="left:40px;top:276px;width:2px;height:2px;background:#cfcfcf;"></div>
<div class="a" style="left:18px;top:295px;width:2px;height:2px;background:#cfcfcf;"></div>
<div class="a" style="left:40px;top:295px;width:2px;height:2px;background:#cfcfcf;"></div>
<svg class="a" style="left:1px;top:319px;" width="40" height="40" viewBox="0 0 40 40"><rect x=".5" y=".5" width="24" height="24" fill="#000" stroke="#aaa"/><rect x="13.5" y="13.5" width="25" height="25" fill="#fff" stroke="#999"/><rect x="19.5" y="19.5" width="13" height="13" fill="#4a4a4a" stroke="#222" stroke-width="1"/><path d="M14 38L38 14" stroke="#e11" stroke-width="2"/></svg>
<div class="t" style="left:32px;top:322px;font-size:8px;color:#aaa;">⇆</div>
<div class="a" style="left:3px;top:348px;width:6px;height:6px;background:#ddd;"></div>
<div class="a" style="left:6px;top:351px;width:5px;height:5px;background:#222;"></div>
<div class="a" style="left:2px;top:364px;width:12px;height:12px;background:#111;border:1px solid #666"></div>
<div class="a" style="left:6px;top:368px;width:4px;height:4px;background:#555;"></div>
<svg class="a" style="left:16px;top:364px;" width="12" height="12" viewBox="0 0 12 12"><defs><linearGradient id="mg2"><stop offset="0" stop-color="#fff"/><stop offset="1" stop-color="#333"/></linearGradient></defs><rect width="12" height="12" fill="url(#mg2)"/></svg>
<svg class="a" style="left:31px;top:364px;" width="12" height="12" viewBox="0 0 12 12"><rect x=".5" y=".5" width="11" height="11" fill="#fff" stroke="#222"/><path d="M1 11L11 1" stroke="#e11" stroke-width="1.5"/></svg>
<div class="a" style="left:1px;top:381px;width:14px;height:13px;background:#3a3a3a;"></div>
<div class="a" style="left:16px;top:381px;width:14px;height:13px;background:#5a5a5a;"></div>
<div class="a" style="left:31px;top:381px;width:14px;height:13px;background:#555;"></div>
<svg class="a" style="left:3px;top:383px;" width="10" height="9" viewBox="0 0 10 9"><circle cx="4.5" cy="4.5" r="3.5" fill="none" stroke="#bbb"/><rect x="4.5" y="4.5" width="5" height="4.5" fill="#bbb"/></svg>
<svg class="a" style="left:18px;top:383px;" width="10" height="9" viewBox="0 0 10 9"><circle cx="4" cy="4" r="3.3" fill="none" stroke="#aaa"/><circle cx="6.5" cy="5.5" r="3" fill="none" stroke="#aaa"/></svg>
<svg class="a" style="left:12px;top:400px;" width="18" height="12" viewBox="0 0 18 12"><rect x="5" y="1" width="12" height="9" fill="#999"/><rect x="1" y="4" width="7" height="7" fill="#bbb"/></svg>
<div class="a" style="left:49px;top:61px;width:697px;height:419px;background:#5b5b5b;"></div>
<div class="a" style="left:109px;top:97px;width:574px;height:383px;background:#ffffff;box-shadow:0 0 0 1px #444"></div>
<div class="a" style="left:746px;top:61px;width:14px;height:419px;background:#373737;"></div>
<div class="a" style="left:748px;top:65px;border-left:5px solid transparent;border-right:5px solid transparent;border-bottom:6px solid #e6e6e6"></div>
<div class="a" style="left:747px;top:280px;width:12px;height:11px;background:#8e8e8e;"></div>
<div class="a" style="left:758px;top:46px;width:27px;height:12px;background:#2f2f2f;"></div>
<div class="t" style="left:777px;top:48px;font-size:5px;color:#aaa;letter-spacing:-2px">◂◂</div>
<div class="a" style="left:758px;top:58px;width:2px;height:422px;background:#2f2f2f;"></div>
<div class="a" style="left:760px;top:58px;width:25px;height:422px;background:#4a4a4a;"></div>
<div class="a" style="left:766px;top:61px;width:14px;height:1px;background:#2a2a2a;"></div>
<div class="a" style="left:765px;top:68px;border-top:7px solid transparent;border-bottom:7px solid transparent;border-left:14px solid #a9a9a9"></div>
<div class="a" style="left:760px;top:87px;width:25px;height:1px;background:#333;"></div>
<div class="a" style="left:766px;top:91px;width:14px;height:1px;background:#2a2a2a;"></div>
<div class="t" style="left:764px;top:94px;font-size:13px;color:#bbb;letter-spacing:-2px">A|</div>
<div class="t" style="left:766px;top:116px;font-size:12px;color:#bbb;">¶</div>
<svg class="a" style="left:766px;top:136px;" width="14" height="12" viewBox="0 0 14 12"><rect x="1" y="1" width="6" height="4" fill="#bbb"/><rect x="1" y="7" width="11" height="4" fill="#ddd"/></svg>
<div class="t" style="left:768px;top:155px;font-size:13px;color:#bbb;font-style:italic;font-family:'Liberation Serif',serif">0</div>
<div class="a" style="left:760px;top:176px;width:25px;height:1px;background:#333;"></div>
<div class="a" style="left:766px;top:180px;width:14px;height:1px;background:#2a2a2a;"></div>
<svg class="a" style="left:766px;top:187px;" width="14" height="12" viewBox="0 0 14 12"><path d="M1 2H13M1 6H13M1 10H13" stroke="#ccc" stroke-width="1.5"/></svg>
<svg class="a" style="left:766px;top:205px;" width="14" height="12" viewBox="0 0 14 12"><defs><linearGradient id="dg"><stop offset="0" stop-color="#eee"/><stop offset="1" stop-color="#333"/></linearGradient></defs><rect x=".5" y=".5" width="13" height="11" fill="url(#dg)" stroke="#aaa"/></svg>
<svg class="a" style="left:766px;top:225px;" width="14" height="14" viewBox="0 0 14 14"><circle cx="6" cy="6" r="5" fill="#999"/><circle cx="8" cy="8" r="5" fill="none" stroke="#ccc" stroke-width="1.5"/></svg>
<div class="a" style="left:760px;top:245px;width:25px;height:1px;background:#333;"></div>
<div class="a" style="left:766px;top:249px;width:14px;height:1px;background:#2a2a2a;"></div>
<svg class="a" style="left:766px;top:255px;" width="14" height="14" viewBox="0 0 14 14"><rect x="1" y="1" width="8" height="8" fill="none" stroke="#ccc" stroke-width="1.3"/><rect x="5" y="5" width="8" height="8" fill="#aaa"/></svg>
<div class="a" style="left:760px;top:275px;width:25px;height:1px;background:#333;"></div>
<svg class="a" style="left:0;top:0" width="785" height="480" viewBox="0 0 785 480"><path d="M558.52 307.20A162.72 162.72 0 0 0 323.24 161.56 M308.09 170.14A162.72 162.72 0 0 0 233.08 307.20 M548.35 307.20A152.55 152.55 0 0 0 478.36 178.92 M461.32 169.44A152.55 152.55 0 0 0 243.25 307.20 M538.18 307.20A142.38 142.38 0 0 0 400.81 164.91 M385.33 165.21A142.38 142.38 0 0 0 286.12 216.41 M275.29 231.37A142.38 142.38 0 0 0 253.42 307.20 M528.01 307.20A132.21 132.21 0 0 0 490.23 214.67 M475.58 201.78A132.21 132.21 0 0 0 266.87 277.95 M264.18 294.72A132.21 132.21 0 0 0 263.59 307.20 M517.84 307.20A122.04 122.04 0 0 0 344.33 196.54 M329.06 205.03A122.04 122.04 0 0 0 273.76 307.20 M507.67 307.20A111.87 111.87 0 0 0 439.77 204.33 M423.35 198.78A111.87 111.87 0 0 0 283.93 307.20 M497.50 307.20A101.70 101.70 0 0 0 477.28 246.34 M464.97 232.64A101.70 101.70 0 0 0 345.17 219.00 M330.37 229.35A101.70 101.70 0 0 0 294.10 307.20 M487.33 307.20A91.53 91.53 0 0 0 391.29 215.78 M375.41 217.97A91.53 91.53 0 0 0 304.27 307.20 M477.16 307.20A81.36 81.36 0 0 0 439.55 238.61 M423.58 230.73A81.36 81.36 0 0 0 314.44 307.20 M466.99 307.20A71.19 71.19 0 0 0 372.55 239.91 M356.16 248.07A71.19 71.19 0 0 0 324.61 307.20 M456.82 307.20A61.02 61.02 0 0 0 334.78 307.20 M446.65 307.20A50.85 50.85 0 0 0 350.86 283.41 M345.39 300.56A50.85 50.85 0 0 0 344.95 307.20 M436.48 307.20A40.68 40.68 0 0 0 415.56 271.64 M399.87 266.72A40.68 40.68 0 0 0 355.12 307.20 M426.31 307.20A30.51 30.51 0 0 0 365.29 307.20 M416.14 307.20A20.34 20.34 0 0 0 394.14 286.93 M380.14 294.22A20.34 20.34 0 0 0 375.46 307.20 M405.97 307.20A10.17 10.17 0 0 0 385.63 307.20" fill="none" stroke="#000" stroke-width="4.07" stroke-linecap="round"/><path d="M558.52 307.20A162.72 162.72 0 0 1 323.24 452.84 M308.09 444.26A162.72 162.72 0 0 1 233.08 307.20 M548.35 307.20A152.55 152.55 0 0 1 478.36 435.48 M461.32 444.96A152.55 152.55 0 0 1 243.25 307.20 M538.18 307.20A142.38 142.38 0 0 1 400.81 449.49 M385.33 449.19A142.38 142.38 0 0 1 286.12 397.99 M275.29 383.03A142.38 142.38 0 0 1 253.42 307.20 M528.01 307.20A132.21 132.21 0 0 1 490.23 399.73 M475.58 412.62A132.21 132.21 0 0 1 266.87 336.45 M264.18 319.68A132.21 132.21 0 0 1 263.59 307.20 M517.84 307.20A122.04 122.04 0 0 1 344.33 417.86 M329.06 409.37A122.04 122.04 0 0 1 273.76 307.20 M507.67 307.20A111.87 111.87 0 0 1 439.77 410.07 M423.35 415.62A111.87 111.87 0 0 1 283.93 307.20 M497.50 307.20A101.70 101.70 0 0 1 477.28 368.06 M464.97 381.76A101.70 101.70 0 0 1 345.17 395.40 M330.37 385.05A101.70 101.70 0 0 1 294.10 307.20 M487.33 307.20A91.53 91.53 0 0 1 391.29 398.62 M375.41 396.43A91.53 91.53 0 0 1 304.27 307.20 M477.16 307.20A81.36 81.36 0 0 1 439.55 375.79 M423.58 383.67A81.36 81.36 0 0 1 314.44 307.20 M466.99 307.20A71.19 71.19 0 0 1 372.55 374.49 M356.16 366.33A71.19 71.19 0 0 1 324.61 307.20 M456.82 307.20A61.02 61.02 0 0 1 334.78 307.20 M446.65 307.20A50.85 50.85 0 0 1 350.86 330.99 M345.39 313.84A50.85 50.85 0 0 1 344.95 307.20 M436.48 307.20A40.68 40.68 0 0 1 415.56 342.76 M399.87 347.68A40.68 40.68 0 0 1 355.12 307.20 M426.31 307.20A30.51 30.51 0 0 1 365.29 307.20 M416.14 307.20A20.34 20.34 0 0 1 394.14 327.47 M380.14 320.18A20.34 20.34 0 0 1 375.46 307.20 M405.97 307.20A10.17 10.17 0 0 1 385.63 307.20" fill="none" stroke="#2a3f90" stroke-width="4.57" stroke-linecap="round"/><path d="M558.52 307.20A162.72 162.72 0 0 1 323.24 452.84 M308.09 444.26A162.72 162.72 0 0 1 233.08 307.20 M548.35 307.20A152.55 152.55 0 0 1 478.36 435.48 M461.32 444.96A152.55 152.55 0 0 1 243.25 307.20 M538.18 307.20A142.38 142.38 0 0 1 400.81 449.49 M385.33 449.19A142.38 142.38 0 0 1 286.12 397.99 M275.29 383.03A142.38 142.38 0 0 1 253.42 307.20 M528.01 307.20A132.21 132.21 0 0 1 490.23 399.73 M475.58 412.62A132.21 132.21 0 0 1 266.87 336.45 M264.18 319.68A132.21 132.21 0 0 1 263.59 307.20 M517.84 307.20A122.04 122.04 0 0 1 344.33 417.86 M329.06 409.37A122.04 122.04 0 0 1 273.76 307.20 M507.67 307.20A111.87 111.87 0 0 1 439.77 410.07 M423.35 415.62A111.87 111.87 0 0 1 283.93 307.20 M497.50 307.20A101.70 101.70 0 0 1 477.28 368.06 M464.97 381.76A101.70 101.70 0 0 1 345.17 395.40 M330.37 385.05A101.70 101.70 0 0 1 294.10 307.20 M487.33 307.20A91.53 91.53 0 0 1 391.29 398.62 M375.41 396.43A91.53 91.53 0 0 1 304.27 307.20 M477.16 307.20A81.36 81.36 0 0 1 439.55 375.79 M423.58 383.67A81.36 81.36 0 0 1 314.44 307.20 M466.99 307.20A71.19 71.19 0 0 1 372.55 374.49 M356.16 366.33A71.19 71.19 0 0 1 324.61 307.20 M456.82 307.20A61.02 61.02 0 0 1 334.78 307.20 M446.65 307.20A50.85 50.85 0 0 1 350.86 330.99 M345.39 313.84A50.85 50.85 0 0 1 344.95 307.20 M436.48 307.20A40.68 40.68 0 0 1 415.56 342.76 M399.87 347.68A40.68 40.68 0 0 1 355.12 307.20 M426.31 307.20A30.51 30.51 0 0 1 365.29 307.20 M416.14 307.20A20.34 20.34 0 0 1 394.14 327.47 M380.14 320.18A20.34 20.34 0 0 1 375.46 307.20 M405.97 307.20A10.17 10.17 0 0 1 385.63 307.20" fill="none" stroke="#000" stroke-width="3.87" stroke-linecap="round"/><rect x="319.7" y="450.0" width="4.5" height="4.5" fill="#5b82f0"/><rect x="307.0" y="442.8" width="4.5" height="4.5" fill="#5b82f0"/><rect x="557.0" y="305.7" width="3" height="3" fill="#5b82f0"/><rect x="231.6" y="305.7" width="3" height="3" fill="#5b82f0"/><rect x="474.9" y="434.0" width="4.5" height="4.5" fill="#5b82f0"/><rect x="460.4" y="442.1" width="4.5" height="4.5" fill="#5b82f0"/><rect x="546.9" y="305.7" width="3" height="3" fill="#5b82f0"/><rect x="241.8" y="305.7" width="3" height="3" fill="#5b82f0"/><rect x="397.1" y="447.3" width="4.5" height="4.5" fill="#5b82f0"/><rect x="384.5" y="447.0" width="4.5" height="4.5" fill="#5b82f0"/><rect x="283.0" y="394.6" width="4.5" height="4.5" fill="#5b82f0"/><rect x="273.8" y="382.0" width="4.5" height="4.5" fill="#5b82f0"/><rect x="536.7" y="305.7" width="3" height="3" fill="#5b82f0"/><rect x="251.9" y="305.7" width="3" height="3" fill="#5b82f0"/><rect x="487.0" y="398.5" width="4.5" height="4.5" fill="#5b82f0"/><rect x="474.5" y="409.5" width="4.5" height="4.5" fill="#5b82f0"/><rect x="264.3" y="332.8" width="4.5" height="4.5" fill="#5b82f0"/><rect x="262.1" y="318.9" width="4.5" height="4.5" fill="#5b82f0"/><rect x="526.5" y="305.7" width="3" height="3" fill="#5b82f0"/><rect x="262.1" y="305.7" width="3" height="3" fill="#5b82f0"/><rect x="340.8" y="415.0" width="4.5" height="4.5" fill="#5b82f0"/><rect x="328.0" y="407.9" width="4.5" height="4.5" fill="#5b82f0"/><rect x="516.3" y="305.7" width="3" height="3" fill="#5b82f0"/><rect x="272.3" y="305.7" width="3" height="3" fill="#5b82f0"/><rect x="436.2" y="408.4" width="4.5" height="4.5" fill="#5b82f0"/><rect x="422.5" y="413.0" width="4.5" height="4.5" fill="#5b82f0"/><rect x="506.2" y="305.7" width="3" height="3" fill="#5b82f0"/><rect x="282.4" y="305.7" width="3" height="3" fill="#5b82f0"/><rect x="474.2" y="366.9" width="4.5" height="4.5" fill="#5b82f0"/><rect x="463.8" y="378.5" width="4.5" height="4.5" fill="#5b82f0"/><rect x="341.7" y="392.4" width="4.5" height="4.5" fill="#5b82f0"/><rect x="329.2" y="383.7" width="4.5" height="4.5" fill="#5b82f0"/><rect x="496.0" y="305.7" width="3" height="3" fill="#5b82f0"/><rect x="292.6" y="305.7" width="3" height="3" fill="#5b82f0"/><rect x="387.6" y="396.3" width="4.5" height="4.5" fill="#5b82f0"/><rect x="374.5" y="394.5" width="4.5" height="4.5" fill="#5b82f0"/><rect x="485.8" y="305.7" width="3" height="3" fill="#5b82f0"/><rect x="302.8" y="305.7" width="3" height="3" fill="#5b82f0"/><rect x="436.1" y="374.3" width="4.5" height="4.5" fill="#5b82f0"/><rect x="422.7" y="380.9" width="4.5" height="4.5" fill="#5b82f0"/><rect x="475.7" y="305.7" width="3" height="3" fill="#5b82f0"/><rect x="312.9" y="305.7" width="3" height="3" fill="#5b82f0"/><rect x="369.0" y="371.8" width="4.5" height="4.5" fill="#5b82f0"/><rect x="355.1" y="364.9" width="4.5" height="4.5" fill="#5b82f0"/><rect x="465.5" y="305.7" width="3" height="3" fill="#5b82f0"/><rect x="323.1" y="305.7" width="3" height="3" fill="#5b82f0"/><rect x="455.3" y="305.7" width="3" height="3" fill="#5b82f0"/><rect x="333.3" y="305.7" width="3" height="3" fill="#5b82f0"/><rect x="348.0" y="327.5" width="4.5" height="4.5" fill="#5b82f0"/><rect x="343.3" y="313.0" width="4.5" height="4.5" fill="#5b82f0"/><rect x="445.1" y="305.7" width="3" height="3" fill="#5b82f0"/><rect x="343.5" y="305.7" width="3" height="3" fill="#5b82f0"/><rect x="412.1" y="341.2" width="4.5" height="4.5" fill="#5b82f0"/><rect x="399.0" y="345.3" width="4.5" height="4.5" fill="#5b82f0"/><rect x="435.0" y="305.7" width="3" height="3" fill="#5b82f0"/><rect x="353.6" y="305.7" width="3" height="3" fill="#5b82f0"/><rect x="424.8" y="305.7" width="3" height="3" fill="#5b82f0"/><rect x="363.8" y="305.7" width="3" height="3" fill="#5b82f0"/><rect x="390.5" y="325.1" width="4.5" height="4.5" fill="#5b82f0"/><rect x="378.8" y="319.0" width="4.5" height="4.5" fill="#5b82f0"/><rect x="414.6" y="305.7" width="3" height="3" fill="#5b82f0"/><rect x="374.0" y="305.7" width="3" height="3" fill="#5b82f0"/><rect x="404.5" y="305.7" width="3" height="3" fill="#5b82f0"/><rect x="384.1" y="305.7" width="3" height="3" fill="#5b82f0"/><rect x="474.1" y="321.8" width="3" height="3" fill="#5b82f0"/><rect x="508.0" y="350.0" width="3" height="3" fill="#5b82f0"/><rect x="528.9" y="352.1" width="3" height="3" fill="#5b82f0"/><rect x="545.0" y="367.2" width="3" height="3" fill="#5b82f0"/><rect x="530.7" y="374.0" width="3" height="3" fill="#5b82f0"/><rect x="484.5" y="371.9" width="3" height="3" fill="#5b82f0"/><rect x="452.8" y="376.1" width="3" height="3" fill="#5b82f0"/><rect x="435.4" y="363.8" width="3" height="3" fill="#5b82f0"/><rect x="406.6" y="355.0" width="3" height="3" fill="#5b82f0"/><rect x="406.5" y="406.7" width="3" height="3" fill="#5b82f0"/><rect x="406.6" y="427.1" width="3" height="3" fill="#5b82f0"/><rect x="468.9" y="402.3" width="3" height="3" fill="#5b82f0"/><rect x="479.2" y="420.0" width="3" height="3" fill="#5b82f0"/><rect x="489.5" y="424.9" width="3" height="3" fill="#5b82f0"/><rect x="508.6" y="421.6" width="3" height="3" fill="#5b82f0"/><rect x="452.6" y="457.6" width="3" height="3" fill="#5b82f0"/><rect x="446.5" y="449.1" width="3" height="3" fill="#5b82f0"/><rect x="462.0" y="419.3" width="3" height="3" fill="#5b82f0"/><rect x="472.8" y="412.1" width="3" height="3" fill="#5b82f0"/><rect x="398.5" y="448.0" width="3" height="3" fill="#5b82f0"/><rect x="406.2" y="322.2" width="3" height="3" fill="#5b82f0"/><rect x="270.4" y="351.8" width="3" height="3" fill="#5b82f0"/><rect x="275.3" y="363.2" width="3" height="3" fill="#5b82f0"/><rect x="292.1" y="372.3" width="3" height="3" fill="#5b82f0"/><rect x="303.5" y="371.0" width="3" height="3" fill="#5b82f0"/><rect x="320.3" y="359.6" width="3" height="3" fill="#5b82f0"/><rect x="328.1" y="352.9" width="3" height="3" fill="#5b82f0"/><rect x="349.0" y="328.7" width="3" height="3" fill="#5b82f0"/><rect x="367.8" y="336.6" width="3" height="3" fill="#5b82f0"/><rect x="394.2" y="315.9" width="3" height="3" fill="#5b82f0"/><rect x="394.2" y="336.2" width="3" height="3" fill="#5b82f0"/><rect x="393.1" y="366.7" width="3" height="3" fill="#5b82f0"/><rect x="394.1" y="407.4" width="3" height="3" fill="#5b82f0"/><rect x="311.0" y="433.5" width="3" height="3" fill="#5b82f0"/><rect x="352.0" y="441.6" width="3" height="3" fill="#5b82f0"/><rect x="368.3" y="456.0" width="3" height="3" fill="#5b82f0"/><rect x="384.4" y="447.7" width="3" height="3" fill="#5b82f0"/><rect x="382.3" y="437.4" width="3" height="3" fill="#5b82f0"/><rect x="385.5" y="468.2" width="3" height="3" fill="#5b82f0"/><rect x="252.5" y="385.6" width="3" height="3" fill="#5b82f0"/><rect x="232.5" y="306.5" width="326.0" height="165.0" fill="none" stroke="#7d9cf0" stroke-width="1"/><rect x="230.5" y="304.5" width="4" height="4" fill="#fff" stroke="#7d9cf0" stroke-width="1"/><rect x="393.5" y="304.5" width="4" height="4" fill="#fff" stroke="#7d9cf0" stroke-width="1"/><rect x="556.5" y="304.5" width="4" height="4" fill="#fff" stroke="#7d9cf0" stroke-width="1"/><rect x="230.5" y="387.0" width="4" height="4" fill="#fff" stroke="#7d9cf0" stroke-width="1"/><rect x="556.5" y="387.0" width="4" height="4" fill="#fff" stroke="#7d9cf0" stroke-width="1"/><rect x="230.5" y="469.5" width="4" height="4" fill="#fff" stroke="#7d9cf0" stroke-width="1"/><rect x="393.5" y="469.5" width="4" height="4" fill="#fff" stroke="#7d9cf0" stroke-width="1"/><rect x="556.5" y="469.5" width="4" height="4" fill="#fff" stroke="#7d9cf0" stroke-width="1"/></svg>
<svg class="a" style="left:0;top:0" width="785" height="480"><polygon points="727.0,46.0 728.5,61.2 726.2,60.4 643.0,316.2 641.8,315.8 719.5,58.3 717.1,57.6" fill="#f8f800"/></svg>
</div>
</body></html>
